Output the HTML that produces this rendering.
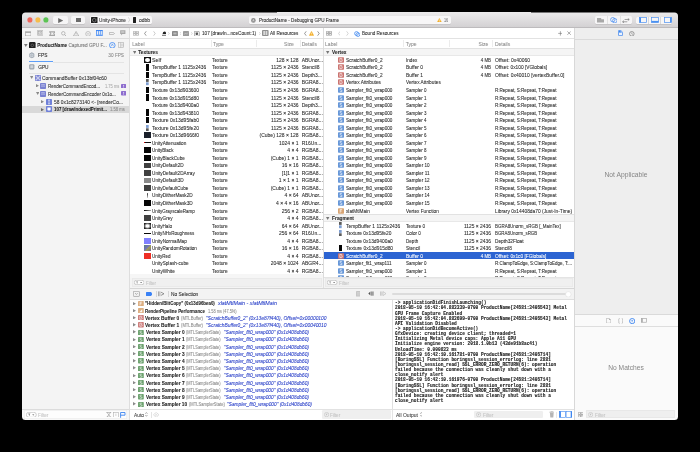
<!DOCTYPE html><html><head><meta charset="utf-8"><style>
html,body{margin:0;padding:0;width:700px;height:452px;overflow:hidden;background:#000;}
body{font-family:"Liberation Sans",sans-serif;position:relative;}
#w{position:absolute;left:0;top:0;width:700px;height:452px;clip-path:inset(12.6px 22px 32px 22px round 3.5px);background:#f4f4f4;will-change:transform;}
#w div,#w span,#w svg{position:absolute;}
#w span{white-space:nowrap;font-size:5px;line-height:6px;color:#222;-webkit-text-stroke-width:0.07px;}
.g{color:#8a8a8a!important}
.b{font-weight:bold}
.m{font-family:"Liberation Mono",monospace;}
</style></head><body><div id="w"><div style="left:22px;top:12px;width:656px;height:15px;background:linear-gradient(#ecebec,#d3d1d3);"></div>
<div style="left:22px;top:27px;width:656px;height:1px;background:#bdbbbd;"></div>
<svg style="left:26.8px;top:17.3px" width="5.8" height="5.8" viewBox="0 0 5.8 5.8"><circle cx="2.9" cy="2.9" r="2.55" fill="#f0665c"/></svg>
<svg style="left:34.800000000000004px;top:17.3px" width="5.8" height="5.8" viewBox="0 0 5.8 5.8"><circle cx="2.9" cy="2.9" r="2.55" fill="#f6bd4c"/></svg>
<svg style="left:42.800000000000004px;top:17.3px" width="5.8" height="5.8" viewBox="0 0 5.8 5.8"><circle cx="2.9" cy="2.9" r="2.55" fill="#5cc454"/></svg>
<div style="left:53px;top:16px;width:15px;height:8px;background:#f6f5f6;border-radius:1.5px;box-shadow:0 0.5px 0.6px rgba(0,0,0,.16);"></div>
<svg style="left:57.6px;top:17.6px" width="5.4" height="5.2" viewBox="0 0 5.4 5.2"><path d="M0.2 0.1L5.2 2.6L0.2 5.1Z" fill="#6a6a6a"/></svg>
<div style="left:71px;top:16px;width:14px;height:8px;background:#f6f5f6;border-radius:1.5px;box-shadow:0 0.5px 0.6px rgba(0,0,0,.16);"></div>
<svg style="left:75.9px;top:17.9px" width="5" height="4.6" viewBox="0 0 5 4.6"><rect x="0" y="0" width="5" height="4.6" fill="#6a6a6a"/></svg>
<div style="left:90px;top:16px;width:62px;height:8px;background:#f8f7f8;border-radius:1.5px;box-shadow:0 0.5px 0.6px rgba(0,0,0,.16);"></div>
<svg style="left:91px;top:17px" width="6.5" height="6" viewBox="0 0 6.5 6"><rect x="0" y="0" width="6.5" height="6" rx="0.6" fill="#1f1f1f"/><path d="M3.25 1.3L4.9 2.25V4.15L3.25 5.1L1.6 4.15V2.25Z" fill="none" stroke="#bbb" stroke-width="0.5"/></svg>
<span style="left:99px;top:18px;font-size:4.8px;color:#2a2a2a;transform:scaleX(0.9829);transform-origin:0 0;">Unity-iPhone</span>
<svg style="left:127.6px;top:17.4px" width="2.2" height="5.6" viewBox="0 0 2.2 5.6"><path d="M0.3 0.3L1.9 2.8L0.3 5.3" fill="none" stroke="#b5b5b5" stroke-width="0.5"/></svg>
<svg style="left:133px;top:17px" width="3.2" height="6" viewBox="0 0 3.2 6"><rect x="0" y="0" width="3.2" height="6" rx="0.6" fill="#1f1f1f"/></svg>
<span style="left:139px;top:18px;font-size:4.8px;color:#2a2a2a;transform:scaleX(1.0307);transform-origin:0 0;">odbb</span>
<div style="left:249px;top:16px;width:202.4px;height:8px;background:#f7f6f7;border-radius:1.5px;box-shadow:0 0.5px 0.6px rgba(0,0,0,.14);"></div>
<svg style="left:251.4px;top:18px" width="4.8" height="4.8" viewBox="0 0 4.8 4.8"><circle cx="2.4" cy="2.4" r="2.3" fill="#8c8c8c"/><path d="M1.6 3.4L2.4 1.3L3.2 3.4M1.9 2.7H2.9" fill="none" stroke="#f2f2f2" stroke-width="0.45"/></svg>
<span style="left:259.4px;top:18px;font-size:4.8px;color:#2a2a2a;transform:scaleX(0.9556);transform-origin:0 0;">ProductName - Debugging GPU Frame</span>
<svg style="left:436.8px;top:17.8px" width="4.8" height="4.6" viewBox="0 0 4.8 4.6"><path d="M2.4 0.2L4.7 4.4H0.1Z" fill="#f4b02a" stroke="#f4b02a" stroke-width="0.3" stroke-linejoin="round"/><path d="M2.4 1.5V3" stroke="#fff" stroke-width="0.5"/><circle cx="2.4" cy="3.65" r="0.28" fill="#fff"/></svg>
<span style="left:444px;top:18px;font-size:4.6px;color:#666;-webkit-text-stroke-width:0;transform:scaleX(0.8195);transform-origin:0 0;">16</span>
<div style="left:595px;top:16px;width:37px;height:8px;background:#f6f5f6;border-radius:1.5px;box-shadow:0 0.5px 0.6px rgba(0,0,0,.16);"></div>
<div style="left:607px;top:16px;width:1px;height:8px;background:#e2e2e2;"></div>
<div style="left:620px;top:16px;width:1px;height:8px;background:#e2e2e2;"></div>
<svg style="left:597.1px;top:18.3px" width="7" height="4.6" viewBox="0 0 7 4.6"><path d="M0 0H4.2V1.3H7V4.6H0Z" fill="#a8a8a8"/></svg>
<svg style="left:609.8px;top:16.9px" width="7.6" height="6.4" viewBox="0 0 7.6 6.4"><circle cx="2.8" cy="2.7" r="2.2" fill="none" stroke="#4a8ef2" stroke-width="0.75"/><circle cx="4.8" cy="3.7" r="2.2" fill="none" stroke="#4a8ef2" stroke-width="0.75"/></svg>
<svg style="left:622.4px;top:17.5px" width="7.8" height="5.2" viewBox="0 0 7.8 5.2"><path d="M2.6 1.5H7.2M5.8 0.3L7.2 1.5L5.8 2.7M5.2 3.8H0.6M2 2.6L0.6 3.8L2 5" fill="none" stroke="#6a6a6a" stroke-width="0.6"/></svg>
<div style="left:636.3px;top:16.8px;width:36px;height:7px;background:#f7f6f7;border-radius:1.5px;box-shadow:0 0.4px 0.6px rgba(0,0,0,.18);"></div>
<div style="left:648px;top:17px;width:1px;height:7px;background:#d8d8d8;"></div>
<div style="left:660px;top:17px;width:1px;height:7px;background:#d8d8d8;"></div>
<svg style="left:639.3px;top:17.1px" width="8" height="6" viewBox="0 0 8 6"><rect x="0.4" y="0.5" width="7.2" height="5" fill="none" stroke="#4a90f0" stroke-width="0.7"/><rect x="0.4" y="0.5" width="1.6" height="5" fill="#4a90f0"/></svg>
<svg style="left:651.3px;top:17.1px" width="8" height="6" viewBox="0 0 8 6"><rect x="0.4" y="0.5" width="7.2" height="5" fill="none" stroke="#4a90f0" stroke-width="0.7"/><rect x="0.4" y="3.9" width="7.2" height="1.6" fill="#4a90f0"/></svg>
<svg style="left:663.5px;top:17.1px" width="8" height="6" viewBox="0 0 8 6"><rect x="0.4" y="0.5" width="7.2" height="5" fill="none" stroke="#4a90f0" stroke-width="0.7"/><rect x="6" y="0.5" width="1.6" height="5" fill="#4a90f0"/></svg>
<div style="left:22px;top:28px;width:107px;height:392px;background:#f4f4f4;"></div>
<div style="left:129px;top:28px;width:1px;height:392px;background:#dedede;"></div>
<div style="left:22px;top:38px;width:107px;height:1px;background:#dcdcdc;"></div>
<svg style="left:25px;top:30.8px" width="6.4" height="5.2" viewBox="0 0 6.4 5.2"><rect x="0.35" y="0.8" width="5.7" height="4.1" fill="none" stroke="#a5a5a5" stroke-width="0.7"/><rect x="0.35" y="0.8" width="5.7" height="1.1" fill="#a5a5a5"/></svg>
<svg style="left:36.8px;top:30.4px" width="6.4" height="5.6" viewBox="0 0 6.4 5.6"><rect x="0.35" y="0.35" width="5.7" height="4.9" rx="0.4" fill="none" stroke="#a5a5a5" stroke-width="0.7"/><rect x="1.6" y="1.5" width="3.2" height="2.6" fill="none" stroke="#a5a5a5" stroke-width="0.6"/><path d="M2.3 2.1L4.1 3.5M4.1 2.1L2.3 3.5" stroke="#a5a5a5" stroke-width="0.5"/></svg>
<svg style="left:48.8px;top:30.8px" width="6.6" height="5.2" viewBox="0 0 6.6 5.2"><path d="M0.2 0.3H6.4V1.3L5.2 2.6L6.4 3.9V4.9H0.2V3.9L1.4 2.6L0.2 1.3Z" fill="#a5a5a5"/><path d="M1.6 1.5H5L4.1 2.6L5 3.7H1.6L2.5 2.6Z" fill="#f4f4f4"/></svg>
<svg style="left:60.8px;top:30.6px" width="5.6" height="5.6" viewBox="0 0 5.6 5.6"><circle cx="2.3" cy="2.3" r="1.75" fill="none" stroke="#a5a5a5" stroke-width="0.7"/><path d="M3.5 3.5L5.2 5.2" stroke="#a5a5a5" stroke-width="0.8"/></svg>
<svg style="left:72.8px;top:30.6px" width="6.2" height="5.4" viewBox="0 0 6.2 5.4"><path d="M3.1 0.5L5.8 5H0.4Z" fill="none" stroke="#a5a5a5" stroke-width="0.7" stroke-linejoin="round"/><path d="M3.1 2V3.5M3.1 4V4.4" stroke="#a5a5a5" stroke-width="0.6"/></svg>
<svg style="left:84.5px;top:30.5px" width="6.2" height="5.8" viewBox="0 0 6.2 5.8"><circle cx="3.1" cy="2.9" r="2.4" fill="none" stroke="#a5a5a5" stroke-width="0.6"/><path d="M1.9 2.9H4.3" stroke="#a5a5a5" stroke-width="0.6"/></svg>
<svg style="left:96.4px;top:30.4px" width="6.8" height="5.8" viewBox="0 0 6.8 5.8"><rect x="0" y="0" width="6.8" height="1.1" fill="#3d86f4"/><rect x="0" y="4.7" width="6.8" height="1.1" fill="#3d86f4"/><path d="M0.5 1V4.8M2.45 1V4.8M4.35 1V4.8M6.3 1V4.8" stroke="#3d86f4" stroke-width="0.75"/></svg>
<svg style="left:108.5px;top:32.2px" width="6" height="3" viewBox="0 0 6 3"><path d="M0.4 0.4H4.2L5.5 1.5L4.2 2.6H0.4Z" fill="none" stroke="#a5a5a5" stroke-width="0.7"/></svg>
<svg style="left:120.4px;top:30.4px" width="5.6" height="5.8" viewBox="0 0 5.6 5.8"><path d="M0.2 0.3H5.4V4H2.4L1.2 5.4V4H0.2Z" fill="#a5a5a5"/><path d="M1.2 1.4H4.4M1.2 2.6H4.4" stroke="#f4f4f4" stroke-width="0.45"/></svg>
<svg style="left:24.4px;top:43.8px" width="3.6" height="3" viewBox="0 0 3.6 3"><path d="M0 0H3.6L1.8 3Z" fill="#777"/></svg>
<svg style="left:29.2px;top:41.6px" width="6.6" height="6.6" viewBox="0 0 6.6 6.6"><rect x="0" y="0" width="6.6" height="6.6" rx="1.3" fill="#1e1e1e"/><circle cx="3.3" cy="3.3" r="1.3" fill="none" stroke="#888" stroke-width="0.5"/></svg>
<span style="left:37.2px;top:43px;font-weight:bold;color:#222;font-size:4.6px;">ProductName</span>
<span style="left:68.4px;top:43px;color:#777;font-size:4.7px;">Captured GPU F...</span>
<svg style="left:109px;top:41.9px" width="6.6" height="6.6" viewBox="0 0 6.6 6.6"><circle cx="3.3" cy="3.3" r="2.8" fill="none" stroke="#3a86f5" stroke-width="0.8"/><path d="M2 4.2L3.4 1.9L4.4 4.2" fill="none" stroke="#3a86f5" stroke-width="0.6"/></svg>
<svg style="left:118.2px;top:42px" width="6" height="6" viewBox="0 0 6 6"><rect x="0.35" y="0.35" width="5.3" height="5.3" fill="none" stroke="#b0b0b0" stroke-width="0.6"/><path d="M2.6 0.4V5.6M2.6 2.2H5.6M2.6 3.8H5.6" stroke="#b0b0b0" stroke-width="0.5"/></svg>
<svg style="left:29px;top:52.1px" width="5.6" height="6.6" viewBox="0 0 5.6 6.6"><path d="M2.8 0.3L5.3 1.7V4.9L2.8 6.3L0.3 4.9V1.7Z" fill="#9aa3ad"/><path d="M2.8 1.2L4.5 2.2V4.4L2.8 5.4L1.1 4.4V2.2Z" fill="#d5dae0"/><path d="M2.8 1.2V5.4M1.1 3.3H4.5" stroke="#9aa3ad" stroke-width="0.4"/></svg>
<span style="left:38px;top:53px;color:#222;font-size:4.8px;">FPS</span>
<span style="left:-76px;width:200px;text-align:right;top:53px;color:#888;font-size:4.7px;">30 FPS</span>
<div style="left:29px;top:61px;width:24px;height:1px;background:#5d9ef8;"></div>
<div style="left:53px;top:62px;width:71px;height:1px;background:#e4e4e4;"></div>
<svg style="left:29px;top:64px" width="5.6" height="5.6" viewBox="0 0 5.6 5.6"><rect x="0.2" y="0.2" width="5.2" height="5.2" rx="1.1" fill="#9aa3ad"/><rect x="1.3" y="1.3" width="3" height="3" rx="0.4" fill="#cfd4da"/></svg>
<span style="left:38.2px;top:65px;color:#222;font-size:4.8px;">GPU</span>
<div style="left:29px;top:73px;width:95px;height:1px;background:#e4e4e4;"></div>
<svg style="left:29.8px;top:76.39999999999999px" width="3.4" height="3" viewBox="0 0 3.4 3"><path d="M0 0H3.4L1.7 3Z" fill="#8a8a8a"/></svg>
<svg style="left:35px;top:75px" width="6" height="6" viewBox="0 0 6 6"><rect x="0" y="0" width="6" height="6" rx="0.8" fill="#7a82d2"/><path d="M1.6 1.6L4.4 4.4M4.4 1.6L1.6 4.4" stroke="#fff" stroke-width="0.6"/><circle cx="1.5" cy="1.5" r="0.6" fill="none" stroke="#fff" stroke-width="0.45"/><circle cx="4.5" cy="1.5" r="0.6" fill="none" stroke="#fff" stroke-width="0.45"/><circle cx="1.5" cy="4.5" r="0.6" fill="none" stroke="#fff" stroke-width="0.45"/><circle cx="4.5" cy="4.5" r="0.6" fill="none" stroke="#fff" stroke-width="0.45"/></svg>
<span style="left:42.2px;top:76px;color:#2e2e2e;font-size:4.8px;transform:scaleX(1.0180);transform-origin:0 0;">CommandBuffer 0x13bf04c60</span>
<svg style="left:35.9px;top:84.1px" width="3" height="3.4" viewBox="0 0 3 3.4"><path d="M0 0L3 1.7L0 3.4Z" fill="#8a8a8a"/></svg>
<svg style="left:40.4px;top:82.9px" width="6" height="6" viewBox="0 0 6 6"><rect x="0" y="0" width="6" height="6" rx="0.8" fill="#7a82d2"/><circle cx="2" cy="3" r="0.6" fill="#fff"/><circle cx="4" cy="3" r="0.6" fill="#fff"/><path d="M1.2 1.6H4.8" stroke="#fff" stroke-width="0.4"/></svg>
<span style="left:48px;top:84px;color:#2e2e2e;font-size:4.7px;transform:scaleX(0.9612);transform-origin:0 0;">RenderCommandEncod...</span>
<span style="left:104.7px;top:84px;font-size:4.6px;color:#aaa;transform:scaleX(0.8750);transform-origin:0 0;">1.75 ms</span>
<svg style="left:120.9px;top:83.6px" width="5.2" height="4.6" viewBox="0 0 5.2 4.6"><rect x="0" y="0" width="5.2" height="4.6" rx="0.8" fill="#8d6dce"/><path d="M2.6 0.9V2.7" stroke="#fff" stroke-width="0.7"/><circle cx="2.6" cy="3.55" r="0.38" fill="#fff"/></svg>
<svg style="left:35.599999999999994px;top:92.0px" width="3.4" height="3" viewBox="0 0 3.4 3"><path d="M0 0H3.4L1.7 3Z" fill="#8a8a8a"/></svg>
<svg style="left:40.4px;top:90.5px" width="6" height="6" viewBox="0 0 6 6"><rect x="0" y="0" width="6" height="6" rx="0.8" fill="#7a82d2"/><circle cx="2" cy="3" r="0.6" fill="#fff"/><circle cx="4" cy="3" r="0.6" fill="#fff"/><path d="M1.2 1.6H4.8" stroke="#fff" stroke-width="0.4"/></svg>
<span style="left:48px;top:92px;color:#2e2e2e;font-size:4.7px;transform:scaleX(0.9722);transform-origin:0 0;">RenderCommandEncoder 0x1o...</span>
<svg style="left:120.9px;top:91.1px" width="5.2" height="4.6" viewBox="0 0 5.2 4.6"><rect x="0" y="0" width="5.2" height="4.6" rx="0.8" fill="#8d6dce"/><path d="M2.6 0.9V2.7" stroke="#fff" stroke-width="0.7"/><circle cx="2.6" cy="3.55" r="0.38" fill="#fff"/></svg>
<svg style="left:41.2px;top:100.0px" width="3" height="3.4" viewBox="0 0 3 3.4"><path d="M0 0L3 1.7L0 3.4Z" fill="#8a8a8a"/></svg>
<svg style="left:46px;top:98.8px" width="6" height="6" viewBox="0 0 6 6"><rect x="0" y="0" width="6" height="6" rx="0.8" fill="#6f80d8"/><path d="M3 1.1V4.9M2.1 1.1H3.9M2.1 4.9H3.9" stroke="#fff" stroke-width="0.6"/></svg>
<span style="left:54.1px;top:100px;color:#2e2e2e;font-size:4.7px;transform:scaleX(1.0388);transform-origin:0 0;">58 0x1c8273140 &lt;- [renderCo...</span>
<div style="left:22px;top:106px;width:107px;height:7px;background:#d9d9d9;"></div>
<svg style="left:41.2px;top:107.7px" width="3" height="3.4" viewBox="0 0 3 3.4"><path d="M0 0L3 1.7L0 3.4Z" fill="#6a6a6a"/></svg>
<svg style="left:46px;top:106.4px" width="6" height="6" viewBox="0 0 6 6"><rect x="0" y="0" width="6" height="6" rx="0.8" fill="#6f80d8"/><path d="M1.4 1.6H4.6V3.4Q4.6 4.6 3 4.6Q1.4 4.6 1.4 3.4Z" fill="#fff"/></svg>
<span style="left:54.1px;top:107px;color:#1e1e1e;font-weight:bold;font-size:4.6px;transform:scaleX(0.9548);transform-origin:0 0;">107 [drawIndexedPrimit...</span>
<span style="left:110.1px;top:107px;font-size:4.6px;color:#8a8a8a;transform:scaleX(0.8994);transform-origin:0 0;">1.58 ms</span>
<div style="left:22px;top:409px;width:107px;height:1px;background:#dcdcdc;"></div>
<div style="left:22px;top:410px;width:107px;height:10px;background:#f7f7f7;"></div>
<div style="left:24.4px;top:410.4px;width:103px;height:8.8px;background:#fdfdfd;border-radius:1px;box-shadow:inset 0 0 0 0.5px #e6e6e6;"></div>
<svg style="left:26px;top:411.9px" width="10.6" height="5.6" viewBox="0 0 10.6 5.6"><rect x="0.3" y="0.3" width="10" height="5" rx="2.5" fill="#fff" stroke="#a8a8a8" stroke-width="0.55"/><path d="M2.1 1.6H4.4L3.6 2.9V4L3 3.7V2.9Z" fill="#8a8a8a"/><path d="M6.2 2.4H8.3L7.25 3.5Z" fill="#444"/></svg>
<span style="left:37.7px;top:413px;color:#c4c4c4;font-size:4.8px;transform:scaleX(0.9652);transform-origin:0 0;">Filter</span>
<svg style="left:106px;top:411.8px" width="5.6" height="5.6" viewBox="0 0 5.6 5.6"><path d="M0.4 0.4H5.2M0.4 5.2H5.2M1 0.4L2.8 2.8L1 5.2M4.6 0.4L2.8 2.8L4.6 5.2" fill="none" stroke="#888" stroke-width="0.55"/></svg>
<svg style="left:112.9px;top:411.8px" width="5.8" height="5.6" viewBox="0 0 5.8 5.6"><rect x="0.3" y="0.3" width="5.2" height="5" fill="none" stroke="#aaa" stroke-width="0.55"/><path d="M2.9 1.6V4" stroke="#aaa" stroke-width="0.5"/></svg>
<svg style="left:120.3px;top:411.6px" width="5.6" height="6" viewBox="0 0 5.6 6"><path d="M0.6 5.8V0.5H5V3.2H0.6" fill="none" stroke="#3d86f0" stroke-width="0.9"/></svg>
<div style="left:130px;top:28px;width:444px;height:260px;background:#fff;"></div>
<div style="left:130px;top:38px;width:444px;height:1px;background:#e2e2e2;"></div>
<div style="left:323px;top:28px;width:1px;height:250px;background:#dcdcdc;"></div>
<svg style="left:133px;top:31.1px" width="5.8" height="4.6" viewBox="0 0 5.8 4.6"><path d="M0.3 0.3H2.6V2.05H0.3Z M3.2 0.3H5.5V2.05H3.2Z M0.3 2.55H2.6V4.3H0.3Z M3.2 2.55H5.5V4.3H3.2Z" fill="none" stroke="#9a9a9a" stroke-width="0.6"/></svg>
<svg style="left:144.1px;top:30.9px" width="2.8" height="5" viewBox="0 0 2.8 5"><path d="M2.2 0.3L0.6 2.5L2.2 4.7" fill="none" stroke="#555" stroke-width="0.6"/></svg>
<svg style="left:153.4px;top:30.9px" width="2.8" height="5" viewBox="0 0 2.8 5"><path d="M0.6 0.3L2.2 2.5L0.6 4.7" fill="none" stroke="#aaa" stroke-width="0.6"/></svg>
<svg style="left:161.6px;top:30.9px" width="4.8" height="4.8" viewBox="0 0 4.8 4.8"><path d="M0.6 3Q0.6 0.4 2.4 0.4Q4.2 0.4 4.2 3Z" fill="#222"/><rect x="0" y="3.8" width="4.8" height="0.9" fill="#555"/></svg>
<svg style="left:168.29999999999998px;top:31.9px" width="1.6" height="3" viewBox="0 0 1.6 3"><path d="M0.3 0.2L1.3 1.5L0.3 2.8" fill="none" stroke="#aaa" stroke-width="0.45"/></svg>
<svg style="left:171.8px;top:30.8px" width="5.9" height="5.3" viewBox="0 0 5.9 5.3"><rect x="0" y="0" width="5.9" height="5.3" rx="0.7" fill="#8a8a8a"/><path d="M1.3 2.65H4.6" stroke="#fff" stroke-width="0.5"/><path d="M1.3 1.5H4.6M1.3 3.8H4.6" stroke="#c8c8c8" stroke-width="0.4"/></svg>
<svg style="left:179.7px;top:31.9px" width="1.6" height="3" viewBox="0 0 1.6 3"><path d="M0.3 0.2L1.3 1.5L0.3 2.8" fill="none" stroke="#aaa" stroke-width="0.45"/></svg>
<svg style="left:183px;top:30.8px" width="6" height="5.3" viewBox="0 0 6 5.3"><rect x="0" y="0" width="6" height="5.3" rx="0.7" fill="#9c9c9c"/><path d="M1.2 3.6L2.4 2L3.6 3.2L4.8 1.6" fill="none" stroke="#dedede" stroke-width="0.5"/></svg>
<svg style="left:191.2px;top:31.9px" width="1.6" height="3" viewBox="0 0 1.6 3"><path d="M0.3 0.2L1.3 1.5L0.3 2.8" fill="none" stroke="#aaa" stroke-width="0.45"/></svg>
<svg style="left:194.3px;top:30.7px" width="5.6" height="5.5" viewBox="0 0 5.6 5.5"><rect x="0.3" y="0.3" width="5" height="4.9" rx="0.9" fill="#fff" stroke="#6a6a6a" stroke-width="0.6"/><path d="M1.6 1.6H4V2.9Q4 4.1 2.8 4.1Q1.6 4.1 1.6 2.9Z" fill="#555"/></svg>
<span style="left:201.6px;top:31px;color:#2a2a2a;font-size:4.8px;transform:scaleX(0.9800);transform-origin:0 0;">107 [drawIn...nceCount:1)</span>
<svg style="left:259.0px;top:31.9px" width="1.6" height="3" viewBox="0 0 1.6 3"><path d="M0.3 0.2L1.3 1.5L0.3 2.8" fill="none" stroke="#aaa" stroke-width="0.45"/></svg>
<svg style="left:262.3px;top:30.4px" width="6.6" height="6" viewBox="0 0 6.6 6"><rect x="0" y="0" width="6.6" height="6" rx="0.9" fill="#8f8f8f"/><path d="M1.3 1.2H3V2.7H1.3Z M3.6 1.2H5.3V2.7H3.6Z M1.3 3.3H3V4.8H1.3Z M3.6 3.3H5.3V4.8H3.6Z" fill="#f2f2f2"/></svg>
<span style="left:270px;top:31px;color:#2a2a2a;font-size:4.8px;transform:scaleX(0.9597);transform-origin:0 0;">All Resources</span>
<svg style="left:304.0px;top:30.9px" width="2.8" height="5" viewBox="0 0 2.8 5"><path d="M2.2 0.3L0.6 2.5L2.2 4.7" fill="none" stroke="#555" stroke-width="0.6"/></svg>
<svg style="left:309.1px;top:30.9px" width="5" height="4.9" viewBox="0 0 5 4.9"><path d="M2.5 0.3L4.8 4.6H0.2Z" fill="#f4b02a" stroke="#f4b02a" stroke-width="0.4" stroke-linejoin="round"/><path d="M2.5 1.7V3.2" stroke="#fff" stroke-width="0.5"/><circle cx="2.5" cy="3.85" r="0.28" fill="#fff"/></svg>
<svg style="left:317.0px;top:30.9px" width="2.8" height="5" viewBox="0 0 2.8 5"><path d="M0.6 0.3L2.2 2.5L0.6 4.7" fill="none" stroke="#555" stroke-width="0.6"/></svg>
<svg style="left:326.4px;top:31.1px" width="5.8" height="4.6" viewBox="0 0 5.8 4.6"><path d="M0.3 0.3H2.6V2.05H0.3Z M3.2 0.3H5.5V2.05H3.2Z M0.3 2.55H2.6V4.3H0.3Z M3.2 2.55H5.5V4.3H3.2Z" fill="none" stroke="#8a8a8a" stroke-width="0.6"/></svg>
<svg style="left:337.6px;top:30.9px" width="2.8" height="5" viewBox="0 0 2.8 5"><path d="M2.2 0.3L0.6 2.5L2.2 4.7" fill="none" stroke="#bbb" stroke-width="0.6"/></svg>
<svg style="left:346.20000000000005px;top:30.9px" width="2.8" height="5" viewBox="0 0 2.8 5"><path d="M0.6 0.3L2.2 2.5L0.6 4.7" fill="none" stroke="#bbb" stroke-width="0.6"/></svg>
<svg style="left:353.9px;top:30.5px" width="6.4" height="6" viewBox="0 0 6.4 6"><circle cx="2.5" cy="2.5" r="1.9" fill="none" stroke="#3d86f0" stroke-width="0.75"/><circle cx="3.9" cy="3.6" r="1.9" fill="none" stroke="#3d86f0" stroke-width="0.75"/></svg>
<span style="left:361.9px;top:31px;color:#2a2a2a;font-size:4.8px;transform:scaleX(0.9570);transform-origin:0 0;">Bound Resources</span>
<svg style="left:557.6px;top:30.9px" width="4.8" height="4.8" viewBox="0 0 4.8 4.8"><path d="M2.4 0.2V4.6M0.2 2.4H4.6" stroke="#666" stroke-width="0.55"/></svg>
<svg style="left:567.2px;top:31.2px" width="4.2" height="4.2" viewBox="0 0 4.2 4.2"><path d="M0.4 0.4L3.8 3.8M3.8 0.4L0.4 3.8" stroke="#666" stroke-width="0.55"/></svg>
<div style="left:130px;top:39px;width:193px;height:9px;background:#fff;"></div>
<div style="left:130px;top:48px;width:193px;height:1px;background:#e2e2e2;"></div>
<span style="left:132.3px;top:41px;color:#8e8e8e;">Label</span>
<div style="left:211px;top:40px;width:1px;height:7px;background:#ececec;"></div>
<span style="left:212.9px;top:41px;color:#8e8e8e;">Type</span>
<div style="left:256px;top:40px;width:1px;height:7px;background:#ececec;"></div>
<span style="left:93.80000000000001px;width:200px;text-align:right;top:41px;color:#8e8e8e;">Size</span>
<div style="left:300px;top:40px;width:1px;height:7px;background:#ececec;"></div>
<span style="left:301.7px;top:41px;color:#8e8e8e;">Details</span>
<div style="left:324px;top:39px;width:250px;height:9px;background:#fff;"></div>
<div style="left:324px;top:48px;width:250px;height:1px;background:#e2e2e2;"></div>
<span style="left:325.1px;top:41px;color:#8e8e8e;">Label</span>
<div style="left:403px;top:40px;width:1px;height:7px;background:#ececec;"></div>
<span style="left:405.8px;top:41px;color:#8e8e8e;">Type</span>
<div style="left:449px;top:40px;width:1px;height:7px;background:#ececec;"></div>
<span style="left:288.2px;width:200px;text-align:right;top:41px;color:#8e8e8e;">Size</span>
<div style="left:492px;top:40px;width:1px;height:7px;background:#ececec;"></div>
<span style="left:494.9px;top:41px;color:#8e8e8e;">Details</span>
<div style="left:130px;top:48px;width:193px;height:1px;background:#e2e2e2;"></div>
<div style="left:130px;top:49px;width:193px;height:6px;background:#f5f5f5;"></div>
<div style="left:130px;top:55px;width:193px;height:1px;background:#e8e8e8;"></div>
<svg style="left:132.60000000000002px;top:50.800000000000004px" width="3.4" height="3" viewBox="0 0 3.4 3"><path d="M0 0H3.4L1.7 3Z" fill="#777"/></svg>
<span style="left:138.3px;top:50px;font-weight:bold;color:#2a2a2a;font-size:4.8px;">Textures</span>
<div style="left:324px;top:48px;width:250px;height:1px;background:#e2e2e2;"></div>
<div style="left:324px;top:49px;width:250px;height:6px;background:#f5f5f5;"></div>
<div style="left:324px;top:55px;width:250px;height:1px;background:#e8e8e8;"></div>
<svg style="left:326.40000000000003px;top:50.800000000000004px" width="3.4" height="3" viewBox="0 0 3.4 3"><path d="M0 0H3.4L1.7 3Z" fill="#777"/></svg>
<span style="left:332.1px;top:50px;font-weight:bold;color:#2a2a2a;font-size:4.8px;">Vertex</span>
<div style="left:144px;top:57px;width:7px;height:6px;background:#111;"></div>
<div style="left:145.3px;top:57.8px;width:4.6px;height:4.3px;background:#fff;border-radius:50%;"></div>
<span style="left:152.3px;top:57px;color:#2a2a2a;transform:scaleX(1.0667);transform-origin:0 0;">Self</span>
<span style="left:212.2px;top:57px;color:#2a2a2a;transform:scaleX(0.9509);transform-origin:0 0;">Texture</span>
<span style="left:98.60000000000002px;width:200px;text-align:right;top:57px;color:#2a2a2a;">128 × 128</span>
<span style="left:301.7px;top:57px;color:#2a2a2a;">ABUnor...</span>
<div style="left:146px;top:64px;width:3px;height:7px;background:#050505;"></div>
<span style="left:152.3px;top:64px;color:#2a2a2a;transform:scaleX(0.9798);transform-origin:0 0;">TempBuffer 1 1125x2436</span>
<span style="left:212.2px;top:64px;color:#2a2a2a;transform:scaleX(0.9509);transform-origin:0 0;">Texture</span>
<span style="left:98.60000000000002px;width:200px;text-align:right;top:64px;color:#2a2a2a;">1125 × 2436</span>
<span style="left:301.7px;top:64px;color:#2a2a2a;">Stencil8</span>
<div style="left:146px;top:72px;width:3px;height:6px;background:#050505;"></div>
<span style="left:152.3px;top:72px;color:#2a2a2a;transform:scaleX(0.9798);transform-origin:0 0;">TempBuffer 1 1125x2436</span>
<span style="left:212.2px;top:72px;color:#2a2a2a;transform:scaleX(0.9509);transform-origin:0 0;">Texture</span>
<span style="left:98.60000000000002px;width:200px;text-align:right;top:72px;color:#2a2a2a;">1125 × 2436</span>
<span style="left:301.7px;top:72px;color:#2a2a2a;">Depth3...</span>
<svg style="left:146.3px;top:79.39px" width="2.7" height="6.2" viewBox="0 0 2.7 6.2"><rect x="0" y="0" width="2.7" height="2.9" fill="#5a5a5a"/><rect x="0" y="3.3" width="2.7" height="2.9" fill="#7f9fd2"/></svg>
<span style="left:152.3px;top:79px;color:#2a2a2a;transform:scaleX(0.9798);transform-origin:0 0;">TempBuffer 1 1125x2436</span>
<span style="left:212.2px;top:79px;color:#2a2a2a;transform:scaleX(0.9509);transform-origin:0 0;">Texture</span>
<span style="left:98.60000000000002px;width:200px;text-align:right;top:79px;color:#2a2a2a;">1125 × 2436</span>
<span style="left:301.7px;top:79px;color:#2a2a2a;">BGRA8...</span>
<div style="left:146px;top:87px;width:3px;height:6px;background:#050505;"></div>
<span style="left:152.3px;top:87px;color:#2a2a2a;transform:scaleX(0.9773);transform-origin:0 0;">Texture 0x13d903600</span>
<span style="left:212.2px;top:87px;color:#2a2a2a;transform:scaleX(0.9509);transform-origin:0 0;">Texture</span>
<span style="left:98.60000000000002px;width:200px;text-align:right;top:87px;color:#2a2a2a;">1125 × 2436</span>
<span style="left:301.7px;top:87px;color:#2a2a2a;">BGRA8...</span>
<div style="left:146px;top:94px;width:3px;height:7px;background:#050505;"></div>
<span style="left:152.3px;top:95px;color:#2a2a2a;transform:scaleX(0.9773);transform-origin:0 0;">Texture 0x13d915d80</span>
<span style="left:212.2px;top:95px;color:#2a2a2a;transform:scaleX(0.9509);transform-origin:0 0;">Texture</span>
<span style="left:98.60000000000002px;width:200px;text-align:right;top:95px;color:#2a2a2a;">1125 × 2436</span>
<span style="left:301.7px;top:95px;color:#2a2a2a;">Stencil8</span>
<span style="left:152.3px;top:102px;color:#2a2a2a;transform:scaleX(0.9773);transform-origin:0 0;">Texture 0x13d9400a0</span>
<span style="left:212.2px;top:102px;color:#2a2a2a;transform:scaleX(0.9509);transform-origin:0 0;">Texture</span>
<span style="left:98.60000000000002px;width:200px;text-align:right;top:102px;color:#2a2a2a;">1125 × 2436</span>
<span style="left:301.7px;top:102px;color:#2a2a2a;">Depth3...</span>
<div style="left:146px;top:109px;width:3px;height:7px;background:#050505;"></div>
<span style="left:152.3px;top:110px;color:#2a2a2a;transform:scaleX(0.9773);transform-origin:0 0;">Texture 0x13d943810</span>
<span style="left:212.2px;top:110px;color:#2a2a2a;transform:scaleX(0.9509);transform-origin:0 0;">Texture</span>
<span style="left:98.60000000000002px;width:200px;text-align:right;top:110px;color:#2a2a2a;">1125 × 2436</span>
<span style="left:301.7px;top:110px;color:#2a2a2a;">BGRA8...</span>
<div style="left:146px;top:117px;width:3px;height:6px;background:#050505;"></div>
<span style="left:152.3px;top:117px;color:#2a2a2a;transform:scaleX(1.0064);transform-origin:0 0;">Texture 0x13d95fab0</span>
<span style="left:212.2px;top:117px;color:#2a2a2a;transform:scaleX(0.9509);transform-origin:0 0;">Texture</span>
<span style="left:98.60000000000002px;width:200px;text-align:right;top:117px;color:#2a2a2a;">1125 × 2436</span>
<span style="left:301.7px;top:117px;color:#2a2a2a;">BGRA8...</span>
<svg style="left:146.3px;top:124.57px" width="2.7" height="6.2" viewBox="0 0 2.7 6.2"><rect x="0" y="0" width="2.7" height="2.9" fill="#7f9fd2"/><rect x="0" y="3.3" width="2.7" height="2.9" fill="#5a5a5a"/></svg>
<span style="left:152.3px;top:125px;color:#2a2a2a;transform:scaleX(1.0064);transform-origin:0 0;">Texture 0x13d95fe20</span>
<span style="left:212.2px;top:125px;color:#2a2a2a;transform:scaleX(0.9509);transform-origin:0 0;">Texture</span>
<span style="left:98.60000000000002px;width:200px;text-align:right;top:125px;color:#2a2a2a;">1125 × 2436</span>
<span style="left:301.7px;top:125px;color:#2a2a2a;">BGRA8...</span>
<div style="left:144px;top:132px;width:7px;height:6px;background:#1a1f2a;"></div>
<span style="left:152.3px;top:132px;color:#2a2a2a;transform:scaleX(1.0064);transform-origin:0 0;">Texture 0x13d9666f0</span>
<span style="left:212.2px;top:132px;color:#2a2a2a;transform:scaleX(0.9509);transform-origin:0 0;">Texture</span>
<span style="left:98.60000000000002px;width:200px;text-align:right;top:132px;color:#2a2a2a;">(Cube) 128 × 128</span>
<span style="left:301.7px;top:132px;color:#2a2a2a;">RGBA8...</span>
<div style="left:144px;top:142px;width:7px;height:1px;background:linear-gradient(90deg,#c00 0 15%,#111 15%);"></div>
<span style="left:152.3px;top:140px;color:#2a2a2a;transform:scaleX(0.9345);transform-origin:0 0;">UnityAttenuation</span>
<span style="left:212.2px;top:140px;color:#2a2a2a;transform:scaleX(0.9509);transform-origin:0 0;">Texture</span>
<span style="left:98.60000000000002px;width:200px;text-align:right;top:140px;color:#2a2a2a;">1024 × 1</span>
<span style="left:301.7px;top:140px;color:#2a2a2a;">R16Un...</span>
<div style="left:144px;top:147px;width:7px;height:6px;background:#050505;"></div>
<span style="left:152.3px;top:147px;color:#2a2a2a;transform:scaleX(0.9058);transform-origin:0 0;">UnityBlack</span>
<span style="left:212.2px;top:147px;color:#2a2a2a;transform:scaleX(0.9509);transform-origin:0 0;">Texture</span>
<span style="left:98.60000000000002px;width:200px;text-align:right;top:147px;color:#2a2a2a;">4 × 4</span>
<span style="left:301.7px;top:147px;color:#2a2a2a;">RGBA8...</span>
<div style="left:144px;top:155px;width:7px;height:6px;background:#050505;"></div>
<span style="left:152.3px;top:155px;color:#2a2a2a;transform:scaleX(0.9219);transform-origin:0 0;">UnityBlackCube</span>
<span style="left:212.2px;top:155px;color:#2a2a2a;transform:scaleX(0.9509);transform-origin:0 0;">Texture</span>
<span style="left:98.60000000000002px;width:200px;text-align:right;top:155px;color:#2a2a2a;">(Cube) 1 × 1</span>
<span style="left:301.7px;top:155px;color:#2a2a2a;">RGBA8...</span>
<div style="left:144px;top:163px;width:7px;height:5px;background:#404040;"></div>
<span style="left:152.3px;top:162px;color:#2a2a2a;transform:scaleX(0.9423);transform-origin:0 0;">UnityDefault2D</span>
<span style="left:212.2px;top:162px;color:#2a2a2a;transform:scaleX(0.9509);transform-origin:0 0;">Texture</span>
<span style="left:98.60000000000002px;width:200px;text-align:right;top:162px;color:#2a2a2a;">16 × 16</span>
<span style="left:301.7px;top:162px;color:#2a2a2a;">RGBA8...</span>
<div style="left:144px;top:170px;width:7px;height:6px;background:#404040;"></div>
<span style="left:152.3px;top:170px;color:#2a2a2a;transform:scaleX(0.9390);transform-origin:0 0;">UnityDefault2DArray</span>
<span style="left:212.2px;top:170px;color:#2a2a2a;transform:scaleX(0.9509);transform-origin:0 0;">Texture</span>
<span style="left:98.60000000000002px;width:200px;text-align:right;top:170px;color:#2a2a2a;">[1]1 × 1</span>
<span style="left:301.7px;top:170px;color:#2a2a2a;">RGBA8...</span>
<div style="left:144px;top:178px;width:7px;height:5px;background:#8a8a8a;"></div>
<span style="left:152.3px;top:177px;color:#2a2a2a;transform:scaleX(0.9423);transform-origin:0 0;">UnityDefault3D</span>
<span style="left:212.2px;top:177px;color:#2a2a2a;transform:scaleX(0.9509);transform-origin:0 0;">Texture</span>
<span style="left:98.60000000000002px;width:200px;text-align:right;top:177px;color:#2a2a2a;">1 × 1 × 1</span>
<span style="left:301.7px;top:177px;color:#2a2a2a;">RGBA8...</span>
<div style="left:144px;top:185px;width:7px;height:6px;background:#404040;"></div>
<span style="left:152.3px;top:185px;color:#2a2a2a;transform:scaleX(0.9263);transform-origin:0 0;">UnityDefaultCube</span>
<span style="left:212.2px;top:185px;color:#2a2a2a;transform:scaleX(0.9509);transform-origin:0 0;">Texture</span>
<span style="left:98.60000000000002px;width:200px;text-align:right;top:185px;color:#2a2a2a;">(Cube) 1 × 1</span>
<span style="left:301.7px;top:185px;color:#2a2a2a;">RGBA8...</span>
<div style="left:146.9px;top:192.64px;width:1.2px;height:5.8px;background:linear-gradient(#222,#ccc);border-radius:0.6px;"></div>
<span style="left:152.3px;top:192px;color:#2a2a2a;transform:scaleX(0.9471);transform-origin:0 0;">UnityDitherMask2D</span>
<span style="left:212.2px;top:192px;color:#2a2a2a;transform:scaleX(0.9509);transform-origin:0 0;">Texture</span>
<span style="left:98.60000000000002px;width:200px;text-align:right;top:192px;color:#2a2a2a;">4 × 64</span>
<span style="left:301.7px;top:192px;color:#2a2a2a;">ABUnor...</span>
<div style="left:144px;top:200px;width:7px;height:6px;background:#050505;"></div>
<span style="left:152.3px;top:200px;color:#2a2a2a;transform:scaleX(0.9471);transform-origin:0 0;">UnityDitherMask3D</span>
<span style="left:212.2px;top:200px;color:#2a2a2a;transform:scaleX(0.9509);transform-origin:0 0;">Texture</span>
<span style="left:98.60000000000002px;width:200px;text-align:right;top:200px;color:#2a2a2a;">4 × 4 × 16</span>
<span style="left:301.7px;top:200px;color:#2a2a2a;">ABUnor...</span>
<div style="left:144px;top:210px;width:7px;height:1px;background:linear-gradient(90deg,#000,#aaa);"></div>
<span style="left:152.3px;top:208px;color:#2a2a2a;transform:scaleX(0.9058);transform-origin:0 0;">UnityGrayscaleRamp</span>
<span style="left:212.2px;top:208px;color:#2a2a2a;transform:scaleX(0.9509);transform-origin:0 0;">Texture</span>
<span style="left:98.60000000000002px;width:200px;text-align:right;top:208px;color:#2a2a2a;">256 × 2</span>
<span style="left:301.7px;top:208px;color:#2a2a2a;">RGBA8...</span>
<div style="left:144px;top:215px;width:7px;height:6px;background:#404040;"></div>
<span style="left:152.3px;top:215px;color:#2a2a2a;transform:scaleX(0.9265);transform-origin:0 0;">UnityGrey</span>
<span style="left:212.2px;top:215px;color:#2a2a2a;transform:scaleX(0.9509);transform-origin:0 0;">Texture</span>
<span style="left:98.60000000000002px;width:200px;text-align:right;top:215px;color:#2a2a2a;">4 × 4</span>
<span style="left:301.7px;top:215px;color:#2a2a2a;">RGBA8...</span>
<div style="left:144px;top:223px;width:7px;height:6px;background:radial-gradient(#fff 0 25%,#aaa 45%,#222 75%);"></div>
<span style="left:152.3px;top:223px;color:#2a2a2a;transform:scaleX(0.9222);transform-origin:0 0;">UnityHalo</span>
<span style="left:212.2px;top:223px;color:#2a2a2a;transform:scaleX(0.9509);transform-origin:0 0;">Texture</span>
<span style="left:98.60000000000002px;width:200px;text-align:right;top:223px;color:#2a2a2a;">64 × 64</span>
<span style="left:301.7px;top:223px;color:#2a2a2a;">ABUnor...</span>
<div style="left:144px;top:233px;width:7px;height:1px;background:#080808;"></div>
<span style="left:152.3px;top:230px;color:#2a2a2a;transform:scaleX(0.9112);transform-origin:0 0;">UnityNHxRoughness</span>
<span style="left:212.2px;top:230px;color:#2a2a2a;transform:scaleX(0.9509);transform-origin:0 0;">Texture</span>
<span style="left:98.60000000000002px;width:200px;text-align:right;top:230px;color:#2a2a2a;">256 × 64</span>
<span style="left:301.7px;top:230px;color:#2a2a2a;">R16Un...</span>
<div style="left:144px;top:238px;width:7px;height:6px;background:#8080ff;"></div>
<span style="left:152.3px;top:238px;color:#2a2a2a;transform:scaleX(0.9346);transform-origin:0 0;">UnityNormalMap</span>
<span style="left:212.2px;top:238px;color:#2a2a2a;transform:scaleX(0.9509);transform-origin:0 0;">Texture</span>
<span style="left:98.60000000000002px;width:200px;text-align:right;top:238px;color:#2a2a2a;">4 × 4</span>
<span style="left:301.7px;top:238px;color:#2a2a2a;">RGBA8...</span>
<div style="left:144px;top:245px;width:7px;height:6px;background:linear-gradient(135deg,#5a8a6a,#7070c0 40%,#a0a050 60%,#6a60a0);"></div>
<span style="left:152.3px;top:245px;color:#2a2a2a;transform:scaleX(0.9157);transform-origin:0 0;">UnityRandomRotation</span>
<span style="left:212.2px;top:245px;color:#2a2a2a;transform:scaleX(0.9509);transform-origin:0 0;">Texture</span>
<span style="left:98.60000000000002px;width:200px;text-align:right;top:245px;color:#2a2a2a;">16 × 16</span>
<span style="left:301.7px;top:245px;color:#2a2a2a;">RGBA8...</span>
<div style="left:144px;top:253px;width:7px;height:6px;background:#ee2f24;"></div>
<span style="left:152.3px;top:253px;color:#2a2a2a;transform:scaleX(0.9039);transform-origin:0 0;">UnityRed</span>
<span style="left:212.2px;top:253px;color:#2a2a2a;transform:scaleX(0.9509);transform-origin:0 0;">Texture</span>
<span style="left:98.60000000000002px;width:200px;text-align:right;top:253px;color:#2a2a2a;">4 × 4</span>
<span style="left:301.7px;top:253px;color:#2a2a2a;">RGBA8...</span>
<span style="left:152.3px;top:260px;color:#2a2a2a;transform:scaleX(0.9340);transform-origin:0 0;">UnitySplash-cube</span>
<span style="left:212.2px;top:260px;color:#2a2a2a;transform:scaleX(0.9509);transform-origin:0 0;">Texture</span>
<span style="left:98.60000000000002px;width:200px;text-align:right;top:260px;color:#2a2a2a;">2048 × 1024</span>
<span style="left:301.7px;top:260px;color:#2a2a2a;">ABGR4...</span>
<span style="left:152.3px;top:268px;color:#2a2a2a;transform:scaleX(0.9426);transform-origin:0 0;">UnityWhite</span>
<span style="left:212.2px;top:268px;color:#2a2a2a;transform:scaleX(0.9509);transform-origin:0 0;">Texture</span>
<span style="left:98.60000000000002px;width:200px;text-align:right;top:268px;color:#2a2a2a;">4 × 4</span>
<span style="left:301.7px;top:268px;color:#2a2a2a;">RGBA8...</span>
<div style="left:130px;top:274px;width:193px;height:4px;background:#f6f6f6;"></div>
<svg style="left:337.9px;top:56.9px" width="6" height="6" viewBox="0 0 6.4 6"><rect x="0" y="0" width="6.4" height="6" rx="0.8" fill="#cb7470"/><path d="M2 1.3H3.6Q4.4 1.3 4.4 2.1Q4.4 2.7 3.8 2.85Q4.6 3 4.6 3.8Q4.6 4.7 3.7 4.7H2Z" fill="none" stroke="#fff" stroke-width="0.65"/></svg>
<span style="left:345.6px;top:57px;color:#2a2a2a;transform:scaleX(0.9521);transform-origin:0 0;">ScratchBuffer0_2</span>
<span style="left:405.8px;top:57px;color:#2a2a2a;transform:scaleX(0.9236);transform-origin:0 0;">Index</span>
<span style="left:291.3px;width:200px;text-align:right;top:57px;color:#2a2a2a;transform:scaleX(0.8825);transform-origin:100% 0;">4 MB</span>
<span style="left:494.9px;top:57px;color:#2a2a2a;transform:scaleX(0.9966);transform-origin:0 0;">Offset: 0x40060</span>
<svg style="left:337.9px;top:64.42999999999999px" width="6" height="6" viewBox="0 0 6.4 6"><rect x="0" y="0" width="6.4" height="6" rx="0.8" fill="#cb7470"/><path d="M2 1.3H3.6Q4.4 1.3 4.4 2.1Q4.4 2.7 3.8 2.85Q4.6 3 4.6 3.8Q4.6 4.7 3.7 4.7H2Z" fill="none" stroke="#fff" stroke-width="0.65"/></svg>
<span style="left:345.6px;top:64px;color:#2a2a2a;transform:scaleX(0.9521);transform-origin:0 0;">ScratchBuffer0_2</span>
<span style="left:405.8px;top:64px;color:#2a2a2a;transform:scaleX(0.9815);transform-origin:0 0;">Buffer 0</span>
<span style="left:291.3px;width:200px;text-align:right;top:64px;color:#2a2a2a;transform:scaleX(0.8825);transform-origin:100% 0;">4 MB</span>
<span style="left:494.9px;top:64px;color:#2a2a2a;transform:scaleX(0.9647);transform-origin:0 0;">Offset: 0x100 [VGlobals]</span>
<svg style="left:337.9px;top:71.96px" width="6" height="6" viewBox="0 0 6.4 6"><rect x="0" y="0" width="6.4" height="6" rx="0.8" fill="#cb7470"/><path d="M2 1.3H3.6Q4.4 1.3 4.4 2.1Q4.4 2.7 3.8 2.85Q4.6 3 4.6 3.8Q4.6 4.7 3.7 4.7H2Z" fill="none" stroke="#fff" stroke-width="0.65"/></svg>
<span style="left:345.6px;top:72px;color:#2a2a2a;transform:scaleX(0.9521);transform-origin:0 0;">ScratchBuffer0_2</span>
<span style="left:405.8px;top:72px;color:#2a2a2a;transform:scaleX(0.9815);transform-origin:0 0;">Buffer 1</span>
<span style="left:291.3px;width:200px;text-align:right;top:72px;color:#2a2a2a;transform:scaleX(0.8825);transform-origin:100% 0;">4 MB</span>
<span style="left:494.9px;top:72px;color:#2a2a2a;transform:scaleX(0.9894);transform-origin:0 0;">Offset: 0x40010 [vertexBuffer.0]</span>
<svg style="left:337.9px;top:79.49px" width="6" height="6" viewBox="0 0 6.4 6"><rect x="0" y="0" width="6.4" height="6" rx="0.8" fill="#cb7470"/><path d="M2 1.3H3.6Q4.4 1.3 4.4 2.1Q4.4 2.7 3.8 2.85Q4.6 3 4.6 3.8Q4.6 4.7 3.7 4.7H2Z" fill="none" stroke="#fff" stroke-width="0.65"/></svg>
<span style="left:345.6px;top:79px;color:#2a2a2a;transform:scaleX(0.9610);transform-origin:0 0;">Vertex Attributes</span>
<span style="left:405.8px;top:79px;color:#2a2a2a;transform:scaleX(0.9555);transform-origin:0 0;">Vertex Attributes</span>
<svg style="left:337.9px;top:87.02px" width="6" height="6" viewBox="0 0 6.4 6"><rect x="0" y="0" width="6.4" height="6" rx="0.8" fill="#6797d8"/><path d="M4.3 1.7Q3.9 1.2 3.2 1.2Q2.1 1.2 2.1 2.1Q2.1 2.8 3.2 3Q4.4 3.2 4.4 4Q4.4 4.8 3.2 4.8Q2.4 4.8 2 4.2" fill="none" stroke="#fff" stroke-width="0.65"/></svg>
<span style="left:345.6px;top:87px;color:#2a2a2a;transform:scaleX(0.9274);transform-origin:0 0;">Sampler_flt0_wrap000</span>
<span style="left:405.8px;top:87px;color:#2a2a2a;transform:scaleX(0.8992);transform-origin:0 0;">Sampler 0</span>
<span style="left:494.9px;top:87px;color:#2a2a2a;transform:scaleX(0.9103);transform-origin:0 0;">R:Repeat, S:Repeat, T:Repeat</span>
<svg style="left:337.9px;top:94.55px" width="6" height="6" viewBox="0 0 6.4 6"><rect x="0" y="0" width="6.4" height="6" rx="0.8" fill="#6797d8"/><path d="M4.3 1.7Q3.9 1.2 3.2 1.2Q2.1 1.2 2.1 2.1Q2.1 2.8 3.2 3Q4.4 3.2 4.4 4Q4.4 4.8 3.2 4.8Q2.4 4.8 2 4.2" fill="none" stroke="#fff" stroke-width="0.65"/></svg>
<span style="left:345.6px;top:95px;color:#2a2a2a;transform:scaleX(0.9274);transform-origin:0 0;">Sampler_flt0_wrap000</span>
<span style="left:405.8px;top:95px;color:#2a2a2a;transform:scaleX(0.8992);transform-origin:0 0;">Sampler 1</span>
<span style="left:494.9px;top:95px;color:#2a2a2a;transform:scaleX(0.9103);transform-origin:0 0;">R:Repeat, S:Repeat, T:Repeat</span>
<svg style="left:337.9px;top:102.08px" width="6" height="6" viewBox="0 0 6.4 6"><rect x="0" y="0" width="6.4" height="6" rx="0.8" fill="#6797d8"/><path d="M4.3 1.7Q3.9 1.2 3.2 1.2Q2.1 1.2 2.1 2.1Q2.1 2.8 3.2 3Q4.4 3.2 4.4 4Q4.4 4.8 3.2 4.8Q2.4 4.8 2 4.2" fill="none" stroke="#fff" stroke-width="0.65"/></svg>
<span style="left:345.6px;top:102px;color:#2a2a2a;transform:scaleX(0.9274);transform-origin:0 0;">Sampler_flt0_wrap000</span>
<span style="left:405.8px;top:102px;color:#2a2a2a;transform:scaleX(0.8992);transform-origin:0 0;">Sampler 2</span>
<span style="left:494.9px;top:102px;color:#2a2a2a;transform:scaleX(0.9103);transform-origin:0 0;">R:Repeat, S:Repeat, T:Repeat</span>
<svg style="left:337.9px;top:109.61px" width="6" height="6" viewBox="0 0 6.4 6"><rect x="0" y="0" width="6.4" height="6" rx="0.8" fill="#6797d8"/><path d="M4.3 1.7Q3.9 1.2 3.2 1.2Q2.1 1.2 2.1 2.1Q2.1 2.8 3.2 3Q4.4 3.2 4.4 4Q4.4 4.8 3.2 4.8Q2.4 4.8 2 4.2" fill="none" stroke="#fff" stroke-width="0.65"/></svg>
<span style="left:345.6px;top:110px;color:#2a2a2a;transform:scaleX(0.9274);transform-origin:0 0;">Sampler_flt0_wrap000</span>
<span style="left:405.8px;top:110px;color:#2a2a2a;transform:scaleX(0.8992);transform-origin:0 0;">Sampler 3</span>
<span style="left:494.9px;top:110px;color:#2a2a2a;transform:scaleX(0.9103);transform-origin:0 0;">R:Repeat, S:Repeat, T:Repeat</span>
<svg style="left:337.9px;top:117.14px" width="6" height="6" viewBox="0 0 6.4 6"><rect x="0" y="0" width="6.4" height="6" rx="0.8" fill="#6797d8"/><path d="M4.3 1.7Q3.9 1.2 3.2 1.2Q2.1 1.2 2.1 2.1Q2.1 2.8 3.2 3Q4.4 3.2 4.4 4Q4.4 4.8 3.2 4.8Q2.4 4.8 2 4.2" fill="none" stroke="#fff" stroke-width="0.65"/></svg>
<span style="left:345.6px;top:117px;color:#2a2a2a;transform:scaleX(0.9274);transform-origin:0 0;">Sampler_flt0_wrap000</span>
<span style="left:405.8px;top:117px;color:#2a2a2a;transform:scaleX(0.8992);transform-origin:0 0;">Sampler 4</span>
<span style="left:494.9px;top:117px;color:#2a2a2a;transform:scaleX(0.9103);transform-origin:0 0;">R:Repeat, S:Repeat, T:Repeat</span>
<svg style="left:337.9px;top:124.66999999999999px" width="6" height="6" viewBox="0 0 6.4 6"><rect x="0" y="0" width="6.4" height="6" rx="0.8" fill="#6797d8"/><path d="M4.3 1.7Q3.9 1.2 3.2 1.2Q2.1 1.2 2.1 2.1Q2.1 2.8 3.2 3Q4.4 3.2 4.4 4Q4.4 4.8 3.2 4.8Q2.4 4.8 2 4.2" fill="none" stroke="#fff" stroke-width="0.65"/></svg>
<span style="left:345.6px;top:125px;color:#2a2a2a;transform:scaleX(0.9274);transform-origin:0 0;">Sampler_flt0_wrap000</span>
<span style="left:405.8px;top:125px;color:#2a2a2a;transform:scaleX(0.8992);transform-origin:0 0;">Sampler 5</span>
<span style="left:494.9px;top:125px;color:#2a2a2a;transform:scaleX(0.9103);transform-origin:0 0;">R:Repeat, S:Repeat, T:Repeat</span>
<svg style="left:337.9px;top:132.2px" width="6" height="6" viewBox="0 0 6.4 6"><rect x="0" y="0" width="6.4" height="6" rx="0.8" fill="#6797d8"/><path d="M4.3 1.7Q3.9 1.2 3.2 1.2Q2.1 1.2 2.1 2.1Q2.1 2.8 3.2 3Q4.4 3.2 4.4 4Q4.4 4.8 3.2 4.8Q2.4 4.8 2 4.2" fill="none" stroke="#fff" stroke-width="0.65"/></svg>
<span style="left:345.6px;top:132px;color:#2a2a2a;transform:scaleX(0.9274);transform-origin:0 0;">Sampler_flt0_wrap000</span>
<span style="left:405.8px;top:132px;color:#2a2a2a;transform:scaleX(0.8992);transform-origin:0 0;">Sampler 6</span>
<span style="left:494.9px;top:132px;color:#2a2a2a;transform:scaleX(0.9103);transform-origin:0 0;">R:Repeat, S:Repeat, T:Repeat</span>
<svg style="left:337.9px;top:139.73px" width="6" height="6" viewBox="0 0 6.4 6"><rect x="0" y="0" width="6.4" height="6" rx="0.8" fill="#6797d8"/><path d="M4.3 1.7Q3.9 1.2 3.2 1.2Q2.1 1.2 2.1 2.1Q2.1 2.8 3.2 3Q4.4 3.2 4.4 4Q4.4 4.8 3.2 4.8Q2.4 4.8 2 4.2" fill="none" stroke="#fff" stroke-width="0.65"/></svg>
<span style="left:345.6px;top:140px;color:#2a2a2a;transform:scaleX(0.9274);transform-origin:0 0;">Sampler_flt0_wrap000</span>
<span style="left:405.8px;top:140px;color:#2a2a2a;transform:scaleX(0.8992);transform-origin:0 0;">Sampler 7</span>
<span style="left:494.9px;top:140px;color:#2a2a2a;transform:scaleX(0.9103);transform-origin:0 0;">R:Repeat, S:Repeat, T:Repeat</span>
<svg style="left:337.9px;top:147.26px" width="6" height="6" viewBox="0 0 6.4 6"><rect x="0" y="0" width="6.4" height="6" rx="0.8" fill="#6797d8"/><path d="M4.3 1.7Q3.9 1.2 3.2 1.2Q2.1 1.2 2.1 2.1Q2.1 2.8 3.2 3Q4.4 3.2 4.4 4Q4.4 4.8 3.2 4.8Q2.4 4.8 2 4.2" fill="none" stroke="#fff" stroke-width="0.65"/></svg>
<span style="left:345.6px;top:147px;color:#2a2a2a;transform:scaleX(0.9274);transform-origin:0 0;">Sampler_flt0_wrap000</span>
<span style="left:405.8px;top:147px;color:#2a2a2a;transform:scaleX(0.8992);transform-origin:0 0;">Sampler 8</span>
<span style="left:494.9px;top:147px;color:#2a2a2a;transform:scaleX(0.9103);transform-origin:0 0;">R:Repeat, S:Repeat, T:Repeat</span>
<svg style="left:337.9px;top:154.79px" width="6" height="6" viewBox="0 0 6.4 6"><rect x="0" y="0" width="6.4" height="6" rx="0.8" fill="#6797d8"/><path d="M4.3 1.7Q3.9 1.2 3.2 1.2Q2.1 1.2 2.1 2.1Q2.1 2.8 3.2 3Q4.4 3.2 4.4 4Q4.4 4.8 3.2 4.8Q2.4 4.8 2 4.2" fill="none" stroke="#fff" stroke-width="0.65"/></svg>
<span style="left:345.6px;top:155px;color:#2a2a2a;transform:scaleX(0.9274);transform-origin:0 0;">Sampler_flt0_wrap000</span>
<span style="left:405.8px;top:155px;color:#2a2a2a;transform:scaleX(0.8992);transform-origin:0 0;">Sampler 9</span>
<span style="left:494.9px;top:155px;color:#2a2a2a;transform:scaleX(0.9103);transform-origin:0 0;">R:Repeat, S:Repeat, T:Repeat</span>
<svg style="left:337.9px;top:162.32px" width="6" height="6" viewBox="0 0 6.4 6"><rect x="0" y="0" width="6.4" height="6" rx="0.8" fill="#6797d8"/><path d="M4.3 1.7Q3.9 1.2 3.2 1.2Q2.1 1.2 2.1 2.1Q2.1 2.8 3.2 3Q4.4 3.2 4.4 4Q4.4 4.8 3.2 4.8Q2.4 4.8 2 4.2" fill="none" stroke="#fff" stroke-width="0.65"/></svg>
<span style="left:345.6px;top:162px;color:#2a2a2a;transform:scaleX(0.9274);transform-origin:0 0;">Sampler_flt0_wrap000</span>
<span style="left:405.8px;top:162px;color:#2a2a2a;transform:scaleX(0.9227);transform-origin:0 0;">Sampler 10</span>
<span style="left:494.9px;top:162px;color:#2a2a2a;transform:scaleX(0.9103);transform-origin:0 0;">R:Repeat, S:Repeat, T:Repeat</span>
<svg style="left:337.9px;top:169.85px" width="6" height="6" viewBox="0 0 6.4 6"><rect x="0" y="0" width="6.4" height="6" rx="0.8" fill="#6797d8"/><path d="M4.3 1.7Q3.9 1.2 3.2 1.2Q2.1 1.2 2.1 2.1Q2.1 2.8 3.2 3Q4.4 3.2 4.4 4Q4.4 4.8 3.2 4.8Q2.4 4.8 2 4.2" fill="none" stroke="#fff" stroke-width="0.65"/></svg>
<span style="left:345.6px;top:170px;color:#2a2a2a;transform:scaleX(0.9274);transform-origin:0 0;">Sampler_flt0_wrap000</span>
<span style="left:405.8px;top:170px;color:#2a2a2a;transform:scaleX(0.9364);transform-origin:0 0;">Sampler 11</span>
<span style="left:494.9px;top:170px;color:#2a2a2a;transform:scaleX(0.9103);transform-origin:0 0;">R:Repeat, S:Repeat, T:Repeat</span>
<svg style="left:337.9px;top:177.38px" width="6" height="6" viewBox="0 0 6.4 6"><rect x="0" y="0" width="6.4" height="6" rx="0.8" fill="#6797d8"/><path d="M4.3 1.7Q3.9 1.2 3.2 1.2Q2.1 1.2 2.1 2.1Q2.1 2.8 3.2 3Q4.4 3.2 4.4 4Q4.4 4.8 3.2 4.8Q2.4 4.8 2 4.2" fill="none" stroke="#fff" stroke-width="0.65"/></svg>
<span style="left:345.6px;top:177px;color:#2a2a2a;transform:scaleX(0.9274);transform-origin:0 0;">Sampler_flt0_wrap000</span>
<span style="left:405.8px;top:177px;color:#2a2a2a;transform:scaleX(0.9227);transform-origin:0 0;">Sampler 12</span>
<span style="left:494.9px;top:177px;color:#2a2a2a;transform:scaleX(0.9103);transform-origin:0 0;">R:Repeat, S:Repeat, T:Repeat</span>
<svg style="left:337.9px;top:184.91px" width="6" height="6" viewBox="0 0 6.4 6"><rect x="0" y="0" width="6.4" height="6" rx="0.8" fill="#6797d8"/><path d="M4.3 1.7Q3.9 1.2 3.2 1.2Q2.1 1.2 2.1 2.1Q2.1 2.8 3.2 3Q4.4 3.2 4.4 4Q4.4 4.8 3.2 4.8Q2.4 4.8 2 4.2" fill="none" stroke="#fff" stroke-width="0.65"/></svg>
<span style="left:345.6px;top:185px;color:#2a2a2a;transform:scaleX(0.9274);transform-origin:0 0;">Sampler_flt0_wrap000</span>
<span style="left:405.8px;top:185px;color:#2a2a2a;transform:scaleX(0.9227);transform-origin:0 0;">Sampler 13</span>
<span style="left:494.9px;top:185px;color:#2a2a2a;transform:scaleX(0.9103);transform-origin:0 0;">R:Repeat, S:Repeat, T:Repeat</span>
<svg style="left:337.9px;top:192.44px" width="6" height="6" viewBox="0 0 6.4 6"><rect x="0" y="0" width="6.4" height="6" rx="0.8" fill="#6797d8"/><path d="M4.3 1.7Q3.9 1.2 3.2 1.2Q2.1 1.2 2.1 2.1Q2.1 2.8 3.2 3Q4.4 3.2 4.4 4Q4.4 4.8 3.2 4.8Q2.4 4.8 2 4.2" fill="none" stroke="#fff" stroke-width="0.65"/></svg>
<span style="left:345.6px;top:192px;color:#2a2a2a;transform:scaleX(0.9274);transform-origin:0 0;">Sampler_flt0_wrap000</span>
<span style="left:405.8px;top:192px;color:#2a2a2a;transform:scaleX(0.9227);transform-origin:0 0;">Sampler 14</span>
<span style="left:494.9px;top:192px;color:#2a2a2a;transform:scaleX(0.9103);transform-origin:0 0;">R:Repeat, S:Repeat, T:Repeat</span>
<svg style="left:337.9px;top:199.97px" width="6" height="6" viewBox="0 0 6.4 6"><rect x="0" y="0" width="6.4" height="6" rx="0.8" fill="#6797d8"/><path d="M4.3 1.7Q3.9 1.2 3.2 1.2Q2.1 1.2 2.1 2.1Q2.1 2.8 3.2 3Q4.4 3.2 4.4 4Q4.4 4.8 3.2 4.8Q2.4 4.8 2 4.2" fill="none" stroke="#fff" stroke-width="0.65"/></svg>
<span style="left:345.6px;top:200px;color:#2a2a2a;transform:scaleX(0.9274);transform-origin:0 0;">Sampler_flt0_wrap000</span>
<span style="left:405.8px;top:200px;color:#2a2a2a;transform:scaleX(0.9227);transform-origin:0 0;">Sampler 15</span>
<span style="left:494.9px;top:200px;color:#2a2a2a;transform:scaleX(0.9103);transform-origin:0 0;">R:Repeat, S:Repeat, T:Repeat</span>
<svg style="left:337.9px;top:207.5px" width="6" height="6" viewBox="0 0 6.4 6"><rect x="0" y="0" width="6.4" height="6" rx="0.8" fill="#d8a473"/><path d="M2.3 4.8V1.3H4.4M2.3 3H4" fill="none" stroke="#fff" stroke-width="0.7"/></svg>
<span style="left:345.6px;top:208px;color:#2a2a2a;transform:scaleX(0.9408);transform-origin:0 0;">xlatMtlMain</span>
<span style="left:405.8px;top:208px;color:#2a2a2a;transform:scaleX(0.9439);transform-origin:0 0;">Vertex Function</span>
<span style="left:494.9px;top:208px;color:#2a2a2a;transform:scaleX(0.9723);transform-origin:0 0;">Library 0x14408da70 (Just-In-Time)</span>
<div style="left:324px;top:214px;width:250px;height:1px;background:#e2e2e2;"></div>
<div style="left:324px;top:215px;width:250px;height:6px;background:#f5f5f5;"></div>
<div style="left:324px;top:221px;width:250px;height:1px;background:#e8e8e8;"></div>
<svg style="left:326.40000000000003px;top:216.79999999999998px" width="3.4" height="3" viewBox="0 0 3.4 3"><path d="M0 0H3.4L1.7 3Z" fill="#777"/></svg>
<span style="left:332.1px;top:216px;font-weight:bold;color:#2a2a2a;font-size:4.8px;">Fragment</span>
<svg style="left:339.3px;top:222.46px" width="2.7" height="6.2" viewBox="0 0 2.7 6.2"><rect x="0" y="0" width="2.7" height="2.9" fill="#5a5a5a"/><rect x="0" y="3.3" width="2.7" height="2.9" fill="#7f9fd2"/></svg>
<span style="left:345.6px;top:223px;color:#2a2a2a;transform:scaleX(0.9798);transform-origin:0 0;">TempBuffer 1 1125x2436</span>
<span style="left:405.8px;top:223px;color:#2a2a2a;transform:scaleX(0.9282);transform-origin:0 0;">Texture 0</span>
<span style="left:291.3px;width:200px;text-align:right;top:223px;color:#2a2a2a;transform:scaleX(0.9827);transform-origin:100% 0;">1125 × 2436</span>
<span style="left:494.9px;top:223px;color:#2a2a2a;transform:scaleX(0.8922);transform-origin:0 0;">BGRA8Unorm_sRGB [_MainTex]</span>
<svg style="left:339.3px;top:229.99px" width="2.7" height="6.2" viewBox="0 0 2.7 6.2"><rect x="0" y="0" width="2.7" height="2.9" fill="#7f9fd2"/><rect x="0" y="3.3" width="2.7" height="2.9" fill="#5a5a5a"/></svg>
<span style="left:345.6px;top:230px;color:#2a2a2a;transform:scaleX(0.9742);transform-origin:0 0;">Texture 0x13d95fe20</span>
<span style="left:405.8px;top:230px;color:#2a2a2a;transform:scaleX(0.9178);transform-origin:0 0;">Color 0</span>
<span style="left:291.3px;width:200px;text-align:right;top:230px;color:#2a2a2a;transform:scaleX(0.9827);transform-origin:100% 0;">1125 × 2436</span>
<span style="left:494.9px;top:230px;color:#2a2a2a;transform:scaleX(0.8777);transform-origin:0 0;">BGRA8Unorm_sRGB</span>
<span style="left:345.6px;top:238px;color:#2a2a2a;transform:scaleX(0.9731);transform-origin:0 0;">Texture 0x13d9400a0</span>
<span style="left:405.8px;top:238px;color:#2a2a2a;transform:scaleX(0.9143);transform-origin:0 0;">Depth</span>
<span style="left:291.3px;width:200px;text-align:right;top:238px;color:#2a2a2a;transform:scaleX(0.9827);transform-origin:100% 0;">1125 × 2436</span>
<span style="left:494.9px;top:238px;color:#2a2a2a;transform:scaleX(0.9490);transform-origin:0 0;">Depth32Float</span>
<div style="left:339px;top:245px;width:3px;height:6px;background:#050505;"></div>
<span style="left:345.6px;top:245px;color:#2a2a2a;transform:scaleX(0.9793);transform-origin:0 0;">Texture 0x13d915d80</span>
<span style="left:405.8px;top:245px;color:#2a2a2a;transform:scaleX(0.9457);transform-origin:0 0;">Stencil</span>
<span style="left:291.3px;width:200px;text-align:right;top:245px;color:#2a2a2a;transform:scaleX(0.9827);transform-origin:100% 0;">1125 × 2436</span>
<span style="left:494.9px;top:245px;color:#2a2a2a;transform:scaleX(0.9440);transform-origin:0 0;">Stencil8</span>
<div style="left:324px;top:252px;width:250px;height:7px;background:#2c64d2;"></div>
<svg style="left:337.9px;top:252.68px" width="6" height="6" viewBox="0 0 6.4 6"><rect x="0" y="0" width="6.4" height="6" rx="0.8" fill="#cb7470"/><path d="M2 1.3H3.6Q4.4 1.3 4.4 2.1Q4.4 2.7 3.8 2.85Q4.6 3 4.6 3.8Q4.6 4.7 3.7 4.7H2Z" fill="none" stroke="#fff" stroke-width="0.65"/></svg>
<span style="left:345.6px;top:253px;color:#fff;transform:scaleX(0.9521);transform-origin:0 0;">ScratchBuffer0_2</span>
<span style="left:405.8px;top:253px;color:#fff;transform:scaleX(0.9815);transform-origin:0 0;">Buffer 0</span>
<span style="left:291.3px;width:200px;text-align:right;top:253px;color:#fff;transform:scaleX(0.8825);transform-origin:100% 0;">4 MB</span>
<span style="left:494.9px;top:253px;color:#fff;transform:scaleX(0.9599);transform-origin:0 0;">Offset: 0x1c0 [FGlobals]</span>
<svg style="left:337.9px;top:260.21px" width="6" height="6" viewBox="0 0 6.4 6"><rect x="0" y="0" width="6.4" height="6" rx="0.8" fill="#6797d8"/><path d="M4.3 1.7Q3.9 1.2 3.2 1.2Q2.1 1.2 2.1 2.1Q2.1 2.8 3.2 3Q4.4 3.2 4.4 4Q4.4 4.8 3.2 4.8Q2.4 4.8 2 4.2" fill="none" stroke="#fff" stroke-width="0.65"/></svg>
<span style="left:345.6px;top:260px;color:#2a2a2a;transform:scaleX(0.9230);transform-origin:0 0;">Sampler_flt1_wrap111</span>
<span style="left:405.8px;top:260px;color:#2a2a2a;transform:scaleX(0.8992);transform-origin:0 0;">Sampler 0</span>
<span style="left:494.9px;top:260px;color:#2a2a2a;transform:scaleX(0.8959);transform-origin:0 0;">R:ClampToEdge, S:ClampToEdge, T:...</span>
<svg style="left:337.9px;top:267.74px" width="6" height="6" viewBox="0 0 6.4 6"><rect x="0" y="0" width="6.4" height="6" rx="0.8" fill="#6797d8"/><path d="M4.3 1.7Q3.9 1.2 3.2 1.2Q2.1 1.2 2.1 2.1Q2.1 2.8 3.2 3Q4.4 3.2 4.4 4Q4.4 4.8 3.2 4.8Q2.4 4.8 2 4.2" fill="none" stroke="#fff" stroke-width="0.65"/></svg>
<span style="left:345.6px;top:268px;color:#2a2a2a;transform:scaleX(0.9274);transform-origin:0 0;">Sampler_flt0_wrap000</span>
<span style="left:405.8px;top:268px;color:#2a2a2a;transform:scaleX(0.8992);transform-origin:0 0;">Sampler 1</span>
<span style="left:494.9px;top:268px;color:#2a2a2a;transform:scaleX(0.9103);transform-origin:0 0;">R:Repeat, S:Repeat, T:Repeat</span>
<svg style="left:337.9px;top:275.27px" width="6" height="6" viewBox="0 0 6.4 6"><rect x="0" y="0" width="6.4" height="6" rx="0.8" fill="#6797d8"/><path d="M4.3 1.7Q3.9 1.2 3.2 1.2Q2.1 1.2 2.1 2.1Q2.1 2.8 3.2 3Q4.4 3.2 4.4 4Q4.4 4.8 3.2 4.8Q2.4 4.8 2 4.2" fill="none" stroke="#fff" stroke-width="0.65"/></svg>
<span style="left:345.6px;top:275px;color:#2a2a2a;transform:scaleX(0.9274);transform-origin:0 0;">Sampler_flt0_wrap000</span>
<span style="left:405.8px;top:275px;color:#2a2a2a;transform:scaleX(0.8992);transform-origin:0 0;">Sampler 2</span>
<span style="left:494.9px;top:275px;color:#2a2a2a;transform:scaleX(0.9103);transform-origin:0 0;">R:Repeat, S:Repeat, T:Repeat</span>
<div style="left:324px;top:277px;width:250px;height:1px;background:#e4e4e4;"></div>
<div style="left:130px;top:278px;width:444px;height:10px;background:#f4f4f4;"></div>
<div style="left:131.5px;top:278.2px;width:190.2px;height:8.6px;background:#f0f0f0;border-radius:1px;box-shadow:inset 0 0 0 0.5px #e4e4e4;"></div>
<svg style="left:133.8px;top:279.8px" width="10.4" height="5" viewBox="0 0 10.4 5"><rect x="0.3" y="0.3" width="9.8" height="4.4" rx="2.2" fill="#fdfdfd" stroke="#a8a8a8" stroke-width="0.55"/><path d="M2 1.4H4.2L3.4 2.6V3.7L2.8 3.4V2.6Z" fill="#8a8a8a"/><path d="M6.1 2.1H8.1L7.1 3.1Z" fill="#444"/></svg>
<span style="left:145.9px;top:281px;color:#c4c4c4;font-size:4.8px;transform:scaleX(0.9370);transform-origin:0 0;">Filter</span>
<div style="left:323px;top:278px;width:1px;height:10px;background:#e0e0e0;"></div>
<div style="left:325.0px;top:278.2px;width:247.6px;height:8.6px;background:#f0f0f0;border-radius:1px;box-shadow:inset 0 0 0 0.5px #e4e4e4;"></div>
<svg style="left:327.2px;top:279.8px" width="10.4" height="5" viewBox="0 0 10.4 5"><rect x="0.3" y="0.3" width="9.8" height="4.4" rx="2.2" fill="#fdfdfd" stroke="#a8a8a8" stroke-width="0.55"/><path d="M2 1.4H4.2L3.4 2.6V3.7L2.8 3.4V2.6Z" fill="#8a8a8a"/><path d="M6.1 2.1H8.1L7.1 3.1Z" fill="#444"/></svg>
<span style="left:339.4px;top:281px;color:#c4c4c4;font-size:4.8px;transform:scaleX(0.9370);transform-origin:0 0;">Filter</span>
<div style="left:130px;top:288px;width:444px;height:132px;background:#fff;"></div>
<div style="left:130px;top:288px;width:444px;height:1px;background:#d6d6d6;"></div>
<div style="left:130px;top:289px;width:444px;height:10px;background:#f3f3f3;"></div>
<div style="left:130px;top:299px;width:444px;height:1px;background:#dedede;"></div>
<svg style="left:133.3px;top:290.9px" width="6.8" height="5.8" viewBox="0 0 6.8 5.8"><rect x="0.35" y="0.35" width="6.1" height="5.1" rx="0.7" fill="none" stroke="#8c8c8c" stroke-width="0.6"/><path d="M2.2 2.2L3.4 3.4L4.6 2.2" fill="none" stroke="#666" stroke-width="0.55"/></svg>
<svg style="left:145.9px;top:292.0px" width="6.6" height="4.0" viewBox="0 0 6.6 4.0"><path d="M0 0.5Q0 0 0.5 0H5L6.6 2L5 4H0.5Q0 4 0 3.5Z" fill="#3a82f6"/></svg>
<div style="left:156px;top:291px;width:1px;height:6px;background:#d6d6d6;"></div>
<svg style="left:158px;top:291.0px" width="6.6" height="5.6" viewBox="0 0 6.6 5.6"><path d="M0.5 0.4V5.2M1.9 0.4V5.2" stroke="#8a8a8a" stroke-width="0.7"/><path d="M3 1.2L6 2.8L3 4.4" fill="none" stroke="#666" stroke-width="0.65"/></svg>
<div style="left:168px;top:291px;width:1px;height:6px;background:#d6d6d6;"></div>
<span style="left:170.9px;top:292px;color:#2a2a2a;font-size:4.8px;transform:scaleX(1.0036);transform-origin:0 0;">No Selection</span>
<svg style="left:355.6px;top:291.1px" width="4.6" height="5.6" viewBox="0 0 4.6 5.6"><rect x="0" y="0" width="4.6" height="5.6" rx="0.4" fill="#c4c4c4"/><path d="M0.8 1.6H3.8M0.8 2.8H3.8M0.8 4H3.8" stroke="#e8e8e8" stroke-width="0.4"/></svg>
<svg style="left:367.8px;top:291.2px" width="6.6" height="5.2" viewBox="0 0 6.6 5.2"><path d="M2.4 0.6L0.3 2.6L2.4 4.6Z" fill="#555"/><path d="M3.4 0.5V4.7M4.7 0.5V4.7M6 0.5V4.7" stroke="#555" stroke-width="0.65"/></svg>
<svg style="left:380px;top:291.2px" width="6.4" height="5.2" viewBox="0 0 6.4 5.2"><path d="M0.5 0.5V4.7M1.8 0.5V4.7" stroke="#b0b0b0" stroke-width="0.6"/><path d="M3 0.6L6 2.6L3 4.6Z" fill="none" stroke="#b0b0b0" stroke-width="0.55"/></svg>
<div style="left:392px;top:293px;width:176px;height:2px;background:#dcdcdc;border-radius:1px;"></div>
<svg style="left:565.4px;top:290.6px" width="6.6" height="6.6" viewBox="0 0 6.6 6.6"><circle cx="3.3" cy="3.3" r="2.75" fill="#fff" stroke="#d0d0d0" stroke-width="0.35"/></svg>
<div style="left:392px;top:300px;width:1px;height:109px;background:#e0e0e0;"></div>
<svg style="left:133.29999999999998px;top:301.6px" width="3" height="3.4" viewBox="0 0 3 3.4"><path d="M0 0L3 1.7L0 3.4Z" fill="#8a8a8a"/></svg>
<svg style="left:138.2px;top:300.7px" width="5.8" height="5.4" viewBox="0 0 6.4 6"><rect x="0" y="0" width="6.4" height="6" rx="0.8" fill="#dcae80"/><path d="M2.3 4.8V1.3H4.4M2.3 3H4" fill="none" stroke="#fff" stroke-width="0.7"/></svg>
<span style="left:145.1px;top:301px;font-weight:bold;color:#1e1e1e;font-size:4.8px;transform:scaleX(0.9152);transform-origin:0 0;">&quot;Hidden/BlitCopy&quot; (0x13d96bea0)</span>
<span style="left:217.7px;top:301px;font-style:italic;color:#2a40c8;font-size:4.8px;transform:scaleX(1.1159);transform-origin:0 0;">xlatMtlMain - xlatMtlMain</span>
<svg style="left:133.29999999999998px;top:308.8px" width="3" height="3.4" viewBox="0 0 3 3.4"><path d="M0 0L3 1.7L0 3.4Z" fill="#8a8a8a"/></svg>
<svg style="left:138.2px;top:307.9px" width="5.8" height="5.4" viewBox="0 0 6.4 6"><rect x="0" y="0" width="6.4" height="6" rx="0.8" fill="#dcae80"/><path d="M1.5 4.6L4.6 1.4V4.6Z" fill="#fff" opacity="0.9"/></svg>
<span style="left:145.1px;top:309px;font-weight:bold;color:#1e1e1e;font-size:4.8px;transform:scaleX(0.9147);transform-origin:0 0;">RenderPipeline Performance</span>
<span style="left:208.0px;top:309px;color:#8a8a8a;font-size:4.6px;transform:scaleX(0.8486);transform-origin:0 0;">1.58 ms (47.5%)</span>
<svg style="left:133.29999999999998px;top:316.0px" width="3" height="3.4" viewBox="0 0 3 3.4"><path d="M0 0L3 1.7L0 3.4Z" fill="#8a8a8a"/></svg>
<svg style="left:138.2px;top:315.09999999999997px" width="5.8" height="5.4" viewBox="0 0 6.4 6"><rect x="0" y="0" width="6.4" height="6" rx="0.8" fill="#cc7a78"/><path d="M2 1.3H3.6Q4.4 1.3 4.4 2.1Q4.4 2.7 3.8 2.85Q4.6 3 4.6 3.8Q4.6 4.7 3.7 4.7H2Z" fill="none" stroke="#fff" stroke-width="0.65"/></svg>
<span style="left:145.1px;top:316px;font-weight:bold;color:#1e1e1e;font-size:4.8px;transform:scaleX(1.0130);transform-origin:0 0;">Vertex Buffer 0</span>
<span style="left:181.4px;top:316px;color:#8a8a8a;font-size:4.6px;transform:scaleX(0.9008);transform-origin:0 0;">(MTLBuffer)</span>
<span style="left:205.7px;top:316px;font-style:italic;color:#2a40c8;font-size:4.8px;transform:scaleX(1.0271);transform-origin:0 0;">&quot;ScratchBuffer0_2&quot; (0x13e87f440), Offset=0x00000100</span>
<svg style="left:133.29999999999998px;top:323.20000000000005px" width="3" height="3.4" viewBox="0 0 3 3.4"><path d="M0 0L3 1.7L0 3.4Z" fill="#8a8a8a"/></svg>
<svg style="left:138.2px;top:322.3px" width="5.8" height="5.4" viewBox="0 0 6.4 6"><rect x="0" y="0" width="6.4" height="6" rx="0.8" fill="#cc7a78"/><path d="M2 1.3H3.6Q4.4 1.3 4.4 2.1Q4.4 2.7 3.8 2.85Q4.6 3 4.6 3.8Q4.6 4.7 3.7 4.7H2Z" fill="none" stroke="#fff" stroke-width="0.65"/></svg>
<span style="left:145.1px;top:323px;font-weight:bold;color:#1e1e1e;font-size:4.8px;transform:scaleX(1.0130);transform-origin:0 0;">Vertex Buffer 1</span>
<span style="left:181.4px;top:323px;color:#8a8a8a;font-size:4.6px;transform:scaleX(0.9008);transform-origin:0 0;">(MTLBuffer)</span>
<span style="left:205.7px;top:323px;font-style:italic;color:#2a40c8;font-size:4.8px;transform:scaleX(1.0271);transform-origin:0 0;">&quot;ScratchBuffer0_2&quot; (0x13e87f440), Offset=0x00040010</span>
<svg style="left:133.29999999999998px;top:330.40000000000003px" width="3" height="3.4" viewBox="0 0 3 3.4"><path d="M0 0L3 1.7L0 3.4Z" fill="#8a8a8a"/></svg>
<svg style="left:138.2px;top:329.5px" width="5.8" height="5.4" viewBox="0 0 6.4 6"><rect x="0" y="0" width="6.4" height="6" rx="0.8" fill="#6da26f"/><path d="M4.3 1.7Q3.9 1.2 3.2 1.2Q2.1 1.2 2.1 2.1Q2.1 2.8 3.2 3Q4.4 3.2 4.4 4Q4.4 4.8 3.2 4.8Q2.4 4.8 2 4.2" fill="none" stroke="#fff" stroke-width="0.65"/></svg>
<span style="left:145.7px;top:330px;font-weight:bold;color:#1e1e1e;font-size:4.8px;transform:scaleX(0.9981);transform-origin:0 0;">Vertex Sampler 0</span>
<span style="left:186.3px;top:330px;color:#8a8a8a;font-size:4.6px;transform:scaleX(0.8630);transform-origin:0 0;">(MTLSamplerState)</span>
<span style="left:223.7px;top:330px;font-style:italic;color:#2a40c8;font-size:4.8px;transform:scaleX(0.9986);transform-origin:0 0;">&quot;Sampler_flt0_wrap000&quot; (0x1d408db60)</span>
<svg style="left:133.29999999999998px;top:337.6px" width="3" height="3.4" viewBox="0 0 3 3.4"><path d="M0 0L3 1.7L0 3.4Z" fill="#8a8a8a"/></svg>
<svg style="left:138.2px;top:336.7px" width="5.8" height="5.4" viewBox="0 0 6.4 6"><rect x="0" y="0" width="6.4" height="6" rx="0.8" fill="#6da26f"/><path d="M4.3 1.7Q3.9 1.2 3.2 1.2Q2.1 1.2 2.1 2.1Q2.1 2.8 3.2 3Q4.4 3.2 4.4 4Q4.4 4.8 3.2 4.8Q2.4 4.8 2 4.2" fill="none" stroke="#fff" stroke-width="0.65"/></svg>
<span style="left:145.7px;top:337px;font-weight:bold;color:#1e1e1e;font-size:4.8px;transform:scaleX(0.9981);transform-origin:0 0;">Vertex Sampler 1</span>
<span style="left:186.3px;top:337px;color:#8a8a8a;font-size:4.6px;transform:scaleX(0.8630);transform-origin:0 0;">(MTLSamplerState)</span>
<span style="left:223.7px;top:337px;font-style:italic;color:#2a40c8;font-size:4.8px;transform:scaleX(0.9986);transform-origin:0 0;">&quot;Sampler_flt0_wrap000&quot; (0x1d408db60)</span>
<svg style="left:133.29999999999998px;top:344.8px" width="3" height="3.4" viewBox="0 0 3 3.4"><path d="M0 0L3 1.7L0 3.4Z" fill="#8a8a8a"/></svg>
<svg style="left:138.2px;top:343.9px" width="5.8" height="5.4" viewBox="0 0 6.4 6"><rect x="0" y="0" width="6.4" height="6" rx="0.8" fill="#6da26f"/><path d="M4.3 1.7Q3.9 1.2 3.2 1.2Q2.1 1.2 2.1 2.1Q2.1 2.8 3.2 3Q4.4 3.2 4.4 4Q4.4 4.8 3.2 4.8Q2.4 4.8 2 4.2" fill="none" stroke="#fff" stroke-width="0.65"/></svg>
<span style="left:145.7px;top:345px;font-weight:bold;color:#1e1e1e;font-size:4.8px;transform:scaleX(0.9981);transform-origin:0 0;">Vertex Sampler 2</span>
<span style="left:186.3px;top:345px;color:#8a8a8a;font-size:4.6px;transform:scaleX(0.8630);transform-origin:0 0;">(MTLSamplerState)</span>
<span style="left:223.7px;top:345px;font-style:italic;color:#2a40c8;font-size:4.8px;transform:scaleX(0.9986);transform-origin:0 0;">&quot;Sampler_flt0_wrap000&quot; (0x1d408db60)</span>
<svg style="left:133.29999999999998px;top:352.0px" width="3" height="3.4" viewBox="0 0 3 3.4"><path d="M0 0L3 1.7L0 3.4Z" fill="#8a8a8a"/></svg>
<svg style="left:138.2px;top:351.09999999999997px" width="5.8" height="5.4" viewBox="0 0 6.4 6"><rect x="0" y="0" width="6.4" height="6" rx="0.8" fill="#6da26f"/><path d="M4.3 1.7Q3.9 1.2 3.2 1.2Q2.1 1.2 2.1 2.1Q2.1 2.8 3.2 3Q4.4 3.2 4.4 4Q4.4 4.8 3.2 4.8Q2.4 4.8 2 4.2" fill="none" stroke="#fff" stroke-width="0.65"/></svg>
<span style="left:145.7px;top:352px;font-weight:bold;color:#1e1e1e;font-size:4.8px;transform:scaleX(0.9981);transform-origin:0 0;">Vertex Sampler 3</span>
<span style="left:186.3px;top:352px;color:#8a8a8a;font-size:4.6px;transform:scaleX(0.8630);transform-origin:0 0;">(MTLSamplerState)</span>
<span style="left:223.7px;top:352px;font-style:italic;color:#2a40c8;font-size:4.8px;transform:scaleX(0.9986);transform-origin:0 0;">&quot;Sampler_flt0_wrap000&quot; (0x1d408db60)</span>
<svg style="left:133.29999999999998px;top:359.20000000000005px" width="3" height="3.4" viewBox="0 0 3 3.4"><path d="M0 0L3 1.7L0 3.4Z" fill="#8a8a8a"/></svg>
<svg style="left:138.2px;top:358.3px" width="5.8" height="5.4" viewBox="0 0 6.4 6"><rect x="0" y="0" width="6.4" height="6" rx="0.8" fill="#6da26f"/><path d="M4.3 1.7Q3.9 1.2 3.2 1.2Q2.1 1.2 2.1 2.1Q2.1 2.8 3.2 3Q4.4 3.2 4.4 4Q4.4 4.8 3.2 4.8Q2.4 4.8 2 4.2" fill="none" stroke="#fff" stroke-width="0.65"/></svg>
<span style="left:145.7px;top:359px;font-weight:bold;color:#1e1e1e;font-size:4.8px;transform:scaleX(0.9981);transform-origin:0 0;">Vertex Sampler 4</span>
<span style="left:186.3px;top:359px;color:#8a8a8a;font-size:4.6px;transform:scaleX(0.8630);transform-origin:0 0;">(MTLSamplerState)</span>
<span style="left:223.7px;top:359px;font-style:italic;color:#2a40c8;font-size:4.8px;transform:scaleX(0.9986);transform-origin:0 0;">&quot;Sampler_flt0_wrap000&quot; (0x1d408db60)</span>
<svg style="left:133.29999999999998px;top:366.40000000000003px" width="3" height="3.4" viewBox="0 0 3 3.4"><path d="M0 0L3 1.7L0 3.4Z" fill="#8a8a8a"/></svg>
<svg style="left:138.2px;top:365.5px" width="5.8" height="5.4" viewBox="0 0 6.4 6"><rect x="0" y="0" width="6.4" height="6" rx="0.8" fill="#6da26f"/><path d="M4.3 1.7Q3.9 1.2 3.2 1.2Q2.1 1.2 2.1 2.1Q2.1 2.8 3.2 3Q4.4 3.2 4.4 4Q4.4 4.8 3.2 4.8Q2.4 4.8 2 4.2" fill="none" stroke="#fff" stroke-width="0.65"/></svg>
<span style="left:145.7px;top:366px;font-weight:bold;color:#1e1e1e;font-size:4.8px;transform:scaleX(0.9981);transform-origin:0 0;">Vertex Sampler 5</span>
<span style="left:186.3px;top:366px;color:#8a8a8a;font-size:4.6px;transform:scaleX(0.8630);transform-origin:0 0;">(MTLSamplerState)</span>
<span style="left:223.7px;top:366px;font-style:italic;color:#2a40c8;font-size:4.8px;transform:scaleX(0.9986);transform-origin:0 0;">&quot;Sampler_flt0_wrap000&quot; (0x1d408db60)</span>
<svg style="left:133.29999999999998px;top:373.6px" width="3" height="3.4" viewBox="0 0 3 3.4"><path d="M0 0L3 1.7L0 3.4Z" fill="#8a8a8a"/></svg>
<svg style="left:138.2px;top:372.7px" width="5.8" height="5.4" viewBox="0 0 6.4 6"><rect x="0" y="0" width="6.4" height="6" rx="0.8" fill="#6da26f"/><path d="M4.3 1.7Q3.9 1.2 3.2 1.2Q2.1 1.2 2.1 2.1Q2.1 2.8 3.2 3Q4.4 3.2 4.4 4Q4.4 4.8 3.2 4.8Q2.4 4.8 2 4.2" fill="none" stroke="#fff" stroke-width="0.65"/></svg>
<span style="left:145.7px;top:373px;font-weight:bold;color:#1e1e1e;font-size:4.8px;transform:scaleX(0.9981);transform-origin:0 0;">Vertex Sampler 6</span>
<span style="left:186.3px;top:373px;color:#8a8a8a;font-size:4.6px;transform:scaleX(0.8630);transform-origin:0 0;">(MTLSamplerState)</span>
<span style="left:223.7px;top:373px;font-style:italic;color:#2a40c8;font-size:4.8px;transform:scaleX(0.9986);transform-origin:0 0;">&quot;Sampler_flt0_wrap000&quot; (0x1d408db60)</span>
<svg style="left:133.29999999999998px;top:380.8px" width="3" height="3.4" viewBox="0 0 3 3.4"><path d="M0 0L3 1.7L0 3.4Z" fill="#8a8a8a"/></svg>
<svg style="left:138.2px;top:379.9px" width="5.8" height="5.4" viewBox="0 0 6.4 6"><rect x="0" y="0" width="6.4" height="6" rx="0.8" fill="#6da26f"/><path d="M4.3 1.7Q3.9 1.2 3.2 1.2Q2.1 1.2 2.1 2.1Q2.1 2.8 3.2 3Q4.4 3.2 4.4 4Q4.4 4.8 3.2 4.8Q2.4 4.8 2 4.2" fill="none" stroke="#fff" stroke-width="0.65"/></svg>
<span style="left:145.7px;top:381px;font-weight:bold;color:#1e1e1e;font-size:4.8px;transform:scaleX(0.9981);transform-origin:0 0;">Vertex Sampler 7</span>
<span style="left:186.3px;top:381px;color:#8a8a8a;font-size:4.6px;transform:scaleX(0.8630);transform-origin:0 0;">(MTLSamplerState)</span>
<span style="left:223.7px;top:381px;font-style:italic;color:#2a40c8;font-size:4.8px;transform:scaleX(0.9986);transform-origin:0 0;">&quot;Sampler_flt0_wrap000&quot; (0x1d408db60)</span>
<svg style="left:133.29999999999998px;top:388.00000000000006px" width="3" height="3.4" viewBox="0 0 3 3.4"><path d="M0 0L3 1.7L0 3.4Z" fill="#8a8a8a"/></svg>
<svg style="left:138.2px;top:387.1px" width="5.8" height="5.4" viewBox="0 0 6.4 6"><rect x="0" y="0" width="6.4" height="6" rx="0.8" fill="#6da26f"/><path d="M4.3 1.7Q3.9 1.2 3.2 1.2Q2.1 1.2 2.1 2.1Q2.1 2.8 3.2 3Q4.4 3.2 4.4 4Q4.4 4.8 3.2 4.8Q2.4 4.8 2 4.2" fill="none" stroke="#fff" stroke-width="0.65"/></svg>
<span style="left:145.7px;top:388px;font-weight:bold;color:#1e1e1e;font-size:4.8px;transform:scaleX(0.9981);transform-origin:0 0;">Vertex Sampler 8</span>
<span style="left:186.3px;top:388px;color:#8a8a8a;font-size:4.6px;transform:scaleX(0.8630);transform-origin:0 0;">(MTLSamplerState)</span>
<span style="left:223.7px;top:388px;font-style:italic;color:#2a40c8;font-size:4.8px;transform:scaleX(0.9986);transform-origin:0 0;">&quot;Sampler_flt0_wrap000&quot; (0x1d408db60)</span>
<svg style="left:133.29999999999998px;top:395.20000000000005px" width="3" height="3.4" viewBox="0 0 3 3.4"><path d="M0 0L3 1.7L0 3.4Z" fill="#8a8a8a"/></svg>
<svg style="left:138.2px;top:394.3px" width="5.8" height="5.4" viewBox="0 0 6.4 6"><rect x="0" y="0" width="6.4" height="6" rx="0.8" fill="#6da26f"/><path d="M4.3 1.7Q3.9 1.2 3.2 1.2Q2.1 1.2 2.1 2.1Q2.1 2.8 3.2 3Q4.4 3.2 4.4 4Q4.4 4.8 3.2 4.8Q2.4 4.8 2 4.2" fill="none" stroke="#fff" stroke-width="0.65"/></svg>
<span style="left:145.7px;top:395px;font-weight:bold;color:#1e1e1e;font-size:4.8px;transform:scaleX(0.9981);transform-origin:0 0;">Vertex Sampler 9</span>
<span style="left:186.3px;top:395px;color:#8a8a8a;font-size:4.6px;transform:scaleX(0.8630);transform-origin:0 0;">(MTLSamplerState)</span>
<span style="left:223.7px;top:395px;font-style:italic;color:#2a40c8;font-size:4.8px;transform:scaleX(0.9986);transform-origin:0 0;">&quot;Sampler_flt0_wrap000&quot; (0x1d408db60)</span>
<svg style="left:133.29999999999998px;top:402.40000000000003px" width="3" height="3.4" viewBox="0 0 3 3.4"><path d="M0 0L3 1.7L0 3.4Z" fill="#8a8a8a"/></svg>
<svg style="left:138.2px;top:401.5px" width="5.8" height="5.4" viewBox="0 0 6.4 6"><rect x="0" y="0" width="6.4" height="6" rx="0.8" fill="#6da26f"/><path d="M4.3 1.7Q3.9 1.2 3.2 1.2Q2.1 1.2 2.1 2.1Q2.1 2.8 3.2 3Q4.4 3.2 4.4 4Q4.4 4.8 3.2 4.8Q2.4 4.8 2 4.2" fill="none" stroke="#fff" stroke-width="0.65"/></svg>
<span style="left:145.7px;top:402px;font-weight:bold;color:#1e1e1e;font-size:4.8px;transform:scaleX(0.9965);transform-origin:0 0;">Vertex Sampler 10</span>
<span style="left:188.6px;top:402px;color:#8a8a8a;font-size:4.6px;transform:scaleX(0.8929);transform-origin:0 0;">(MTLSamplerState)</span>
<span style="left:226.9px;top:402px;font-style:italic;color:#2a40c8;font-size:4.8px;transform:scaleX(0.9986);transform-origin:0 0;">&quot;Sampler_flt0_wrap000&quot; (0x1d408db60)</span>
<svg style="left:133.29999999999998px;top:409.6px" width="3" height="3.4" viewBox="0 0 3 3.4"><path d="M0 0L3 1.7L0 3.4Z" fill="#8a8a8a"/></svg>
<svg style="left:138.2px;top:408.7px" width="5.8" height="5.4" viewBox="0 0 6.4 6"><rect x="0" y="0" width="6.4" height="6" rx="0.8" fill="#6da26f"/><path d="M4.3 1.7Q3.9 1.2 3.2 1.2Q2.1 1.2 2.1 2.1Q2.1 2.8 3.2 3Q4.4 3.2 4.4 4Q4.4 4.8 3.2 4.8Q2.4 4.8 2 4.2" fill="none" stroke="#fff" stroke-width="0.65"/></svg>
<span style="left:145.7px;top:409px;font-weight:bold;color:#1e1e1e;font-size:4.8px;transform:scaleX(1.0030);transform-origin:0 0;">Vertex Sampler 11</span>
<span style="left:188.6px;top:409px;color:#8a8a8a;font-size:4.6px;transform:scaleX(0.8929);transform-origin:0 0;">(MTLSamplerState)</span>
<span style="left:226.9px;top:409px;font-style:italic;color:#2a40c8;font-size:4.8px;transform:scaleX(0.9986);transform-origin:0 0;">&quot;Sampler_flt0_wrap000&quot; (0x1d408db60)</span>
<div style="left:392px;top:300px;width:182px;height:109px;background:#fff;"></div>
<div style="left:392px;top:300px;width:1px;height:109px;background:#e0e0e0;"></div>
<span class="m" style="left:394.8px;top:300.30px;font-size:5.2px;font-weight:bold;color:#222;transform:scaleX(0.863);transform-origin:0 0;-webkit-text-stroke-width:0.12px;">-&gt; applicationDidFinishLaunching()</span>
<span class="m" style="left:394.8px;top:305.44px;font-size:5.2px;font-weight:bold;color:#222;transform:scaleX(0.863);transform-origin:0 0;-webkit-text-stroke-width:0.12px;">2018-05-10 16:42:04.883339-0700 ProductName[24581:3405543] Metal</span>
<span class="m" style="left:394.8px;top:310.58px;font-size:5.2px;font-weight:bold;color:#222;transform:scaleX(0.863);transform-origin:0 0;-webkit-text-stroke-width:0.12px;">GPU Frame Capture Enabled</span>
<span class="m" style="left:394.8px;top:315.72px;font-size:5.2px;font-weight:bold;color:#222;transform:scaleX(0.863);transform-origin:0 0;-webkit-text-stroke-width:0.12px;">2018-05-10 16:42:04.883699-0700 ProductName[24581:3405543] Metal</span>
<span class="m" style="left:394.8px;top:320.86px;font-size:5.2px;font-weight:bold;color:#222;transform:scaleX(0.863);transform-origin:0 0;-webkit-text-stroke-width:0.12px;">API Validation Disabled</span>
<span class="m" style="left:394.8px;top:326.00px;font-size:5.2px;font-weight:bold;color:#222;transform:scaleX(0.863);transform-origin:0 0;-webkit-text-stroke-width:0.12px;">-&gt; applicationDidBecomeActive()</span>
<span class="m" style="left:394.8px;top:331.14px;font-size:5.2px;font-weight:bold;color:#222;transform:scaleX(0.863);transform-origin:0 0;-webkit-text-stroke-width:0.12px;">GfxDevice: creating device client; threaded=1</span>
<span class="m" style="left:394.8px;top:336.28px;font-size:5.2px;font-weight:bold;color:#222;transform:scaleX(0.863);transform-origin:0 0;-webkit-text-stroke-width:0.12px;">Initializing Metal device caps: Apple A11 GPU</span>
<span class="m" style="left:394.8px;top:341.42px;font-size:5.2px;font-weight:bold;color:#222;transform:scaleX(0.863);transform-origin:0 0;-webkit-text-stroke-width:0.12px;">Initialize engine version: 2018.1.0b13 (43de91b8ac41)</span>
<span class="m" style="left:394.8px;top:346.56px;font-size:5.2px;font-weight:bold;color:#222;transform:scaleX(0.863);transform-origin:0 0;-webkit-text-stroke-width:0.12px;">UnloadTime: 0.000833 ms</span>
<span class="m" style="left:394.8px;top:351.70px;font-size:5.2px;font-weight:bold;color:#222;transform:scaleX(0.863);transform-origin:0 0;-webkit-text-stroke-width:0.12px;">2018-05-10 16:42:10.161781-0700 ProductName[24581:3405714]</span>
<span class="m" style="left:394.8px;top:356.84px;font-size:5.2px;font-weight:bold;color:#222;transform:scaleX(0.863);transform-origin:0 0;-webkit-text-stroke-width:0.12px;">[BoringSSL] Function boringssl_session_errorlog: line 2881</span>
<span class="m" style="left:394.8px;top:361.98px;font-size:5.2px;font-weight:bold;color:#222;transform:scaleX(0.863);transform-origin:0 0;-webkit-text-stroke-width:0.12px;">[boringssl_session_read] SSL_ERROR_ZERO_RETURN(6): operation</span>
<span class="m" style="left:394.8px;top:367.12px;font-size:5.2px;font-weight:bold;color:#222;transform:scaleX(0.863);transform-origin:0 0;-webkit-text-stroke-width:0.12px;">failed because the connection was cleanly shut down with a</span>
<span class="m" style="left:394.8px;top:372.26px;font-size:5.2px;font-weight:bold;color:#222;transform:scaleX(0.863);transform-origin:0 0;-webkit-text-stroke-width:0.12px;">close_notify alert</span>
<span class="m" style="left:394.8px;top:377.40px;font-size:5.2px;font-weight:bold;color:#222;transform:scaleX(0.863);transform-origin:0 0;-webkit-text-stroke-width:0.12px;">2018-05-10 16:42:10.161976-0700 ProductName[24581:3405714]</span>
<span class="m" style="left:394.8px;top:382.54px;font-size:5.2px;font-weight:bold;color:#222;transform:scaleX(0.863);transform-origin:0 0;-webkit-text-stroke-width:0.12px;">[BoringSSL] Function boringssl_session_errorlog: line 2881</span>
<span class="m" style="left:394.8px;top:387.68px;font-size:5.2px;font-weight:bold;color:#222;transform:scaleX(0.863);transform-origin:0 0;-webkit-text-stroke-width:0.12px;">[boringssl_session_read] SSL_ERROR_ZERO_RETURN(6): operation</span>
<span class="m" style="left:394.8px;top:392.82px;font-size:5.2px;font-weight:bold;color:#222;transform:scaleX(0.863);transform-origin:0 0;-webkit-text-stroke-width:0.12px;">failed because the connection was cleanly shut down with a</span>
<span class="m" style="left:394.8px;top:397.96px;font-size:5.2px;font-weight:bold;color:#222;transform:scaleX(0.863);transform-origin:0 0;-webkit-text-stroke-width:0.12px;">close_notify alert</span>
<div style="left:130px;top:409px;width:444px;height:1px;background:#e2e2e2;"></div>
<div style="left:130px;top:410px;width:444px;height:10px;background:#fff;"></div>
<span style="left:134px;top:413px;color:#444;font-size:4.8px;transform:scaleX(1.0025);transform-origin:0 0;">Auto</span>
<svg style="left:145.2px;top:412.4px" width="2.8" height="4.8" viewBox="0 0 2.8 4.8"><path d="M0.3 1.8L1.4 0.5L2.5 1.8M0.3 3L1.4 4.3L2.5 3" fill="none" stroke="#666" stroke-width="0.5"/></svg>
<div style="left:151px;top:412px;width:1px;height:6px;background:#e4e4e4;"></div>
<svg style="left:153.3px;top:411.9px" width="6.4" height="5.6" viewBox="0 0 6.4 5.6"><path d="M3.2 0.4L6 2.8L3.2 5.2L0.4 2.8Z" fill="none" stroke="#c4c4c4" stroke-width="0.5"/><path d="M1.8 1.6L4.6 4M4.6 1.6L1.8 4" stroke="#c4c4c4" stroke-width="0.4"/></svg>
<div style="left:321.8px;top:410.2px;width:68.8px;height:9px;background:#efefef;border-radius:1.2px;"></div>
<svg style="left:323.8px;top:412.2px" width="5.2" height="5.2" viewBox="0 0 5.2 5.2"><circle cx="2.6" cy="2.6" r="2.2" fill="none" stroke="#bbb" stroke-width="0.5"/><path d="M1.5 1.7H3.7L2.9 2.7V3.6L2.3 3.3V2.7Z" fill="#bbb"/></svg>
<span style="left:330.4px;top:413px;color:#c4c4c4;font-size:4.8px;transform:scaleX(0.9558);transform-origin:0 0;">Filter</span>
<div style="left:392px;top:410px;width:1px;height:10px;background:#e4e4e4;"></div>
<span style="left:396.4px;top:413px;color:#444;font-size:4.8px;transform:scaleX(1.0437);transform-origin:0 0;">All Output</span>
<svg style="left:419.6px;top:412.4px" width="2.8" height="4.8" viewBox="0 0 2.8 4.8"><path d="M0.3 1.8L1.4 0.5L2.5 1.8M0.3 3L1.4 4.3L2.5 3" fill="none" stroke="#666" stroke-width="0.5"/></svg>
<div style="left:473.9px;top:410.7px;width:68.7px;height:7.6px;background:#efefef;border-radius:1.2px;"></div>
<svg style="left:476px;top:411.8px" width="5.2" height="5.2" viewBox="0 0 5.2 5.2"><circle cx="2.6" cy="2.6" r="2.2" fill="none" stroke="#bbb" stroke-width="0.5"/><path d="M1.5 1.7H3.7L2.9 2.7V3.6L2.3 3.3V2.7Z" fill="#bbb"/></svg>
<span style="left:482.9px;top:413px;color:#c4c4c4;font-size:4.8px;transform:scaleX(0.9745);transform-origin:0 0;">Filter</span>
<svg style="left:548.6px;top:411px" width="5.6" height="6.8" viewBox="0 0 5.6 6.8"><path d="M0.3 1.2H5.3M1.9 1.1V0.4H3.7V1.1" fill="none" stroke="#aaa" stroke-width="0.55"/><path d="M0.9 1.6L1.3 6.4H4.3L4.7 1.6Z" fill="#b5b5b5"/></svg>
<div style="left:556px;top:412px;width:1px;height:6px;background:#e8e8e8;"></div>
<svg style="left:558.8px;top:411.4px" width="13.6" height="6.6" viewBox="0 0 13.6 6.6"><rect x="0.3" y="0.3" width="6.2" height="6" fill="none" stroke="#3d86f0" stroke-width="0.6"/><rect x="0.3" y="0.3" width="1.6" height="6" fill="#3d86f0"/><rect x="7.1" y="0.3" width="6.2" height="6" fill="none" stroke="#3d86f0" stroke-width="0.6"/><rect x="11.7" y="0.3" width="1.6" height="6" fill="#3d86f0"/></svg>
<div style="left:574px;top:28px;width:104px;height:392px;background:#eeeeee;"></div>
<div style="left:574px;top:28px;width:1px;height:392px;background:#d8d8d8;"></div>
<div style="left:575px;top:39px;width:103px;height:1px;background:#dadada;"></div>
<svg style="left:618px;top:30.2px" width="5" height="6" viewBox="0 0 5 6"><path d="M0.3 0.3H3.1L4.7 1.9V5.7H0.3Z" fill="#3d86f0"/><path d="M3 0.4V2H4.6" fill="none" stroke="#fff" stroke-width="0.45"/><rect x="1" y="2.6" width="3" height="2.5" fill="#fff" opacity="0.9"/></svg>
<svg style="left:629px;top:30.6px" width="5.6" height="5.6" viewBox="0 0 5.6 5.6"><circle cx="2.8" cy="2.8" r="2.3" fill="none" stroke="#6a6a6a" stroke-width="0.6"/><path d="M2.8 1.4V2.9L3.8 3.5" fill="none" stroke="#6a6a6a" stroke-width="0.5"/></svg>
<span style="left:426.29999999999995px;width:400px;text-align:center;top:172px;color:#858585;font-size:6.7px;-webkit-text-stroke-width:0;transform:scaleX(1.0055);transform-origin:50% 0;">Not Applicable</span>
<div style="left:575px;top:314px;width:103px;height:1px;background:#dadada;"></div>
<div style="left:575px;top:315px;width:103px;height:11px;background:#fafafa;"></div>
<div style="left:575px;top:326px;width:103px;height:1px;background:#dedede;"></div>
<div style="left:575px;top:327px;width:103px;height:82px;background:#fafafa;"></div>
<svg style="left:605.9px;top:317.8px" width="5.2" height="5.6" viewBox="0 0 5.2 5.6"><path d="M0.35 0.35H3.2L4.85 2V5.25H0.35Z" fill="none" stroke="#a8a8a8" stroke-width="0.6"/><path d="M3.1 0.4V2.1H4.8" fill="#a8a8a8"/></svg>
<svg style="left:617.8px;top:317.8px" width="5.4" height="5.8" viewBox="0 0 5.4 5.8"><path d="M1.6 0.4Q0.8 0.4 0.8 1.3V2.3L0.3 2.9L0.8 3.5V4.5Q0.8 5.4 1.6 5.4M3.8 0.4Q4.6 0.4 4.6 1.3V2.3L5.1 2.9L4.6 3.5V4.5Q4.6 5.4 3.8 5.4" fill="none" stroke="#999" stroke-width="0.55"/></svg>
<svg style="left:629px;top:317.5px" width="6.4" height="6.2" viewBox="0 0 6.4 6.2"><circle cx="3.2" cy="3.1" r="2.6" fill="none" stroke="#3d86f0" stroke-width="0.9"/><path d="M3.2 1.9V4.3M2.3 2.6H4.1" stroke="#3d86f0" stroke-width="0.5"/></svg>
<svg style="left:641px;top:318.3px" width="6" height="4.6" viewBox="0 0 6 4.6"><rect x="0.35" y="0.35" width="5.3" height="3.9" fill="none" stroke="#a8a8a8" stroke-width="0.7"/><rect x="0.35" y="0.35" width="1.4" height="3.9" fill="#a8a8a8"/></svg>
<span style="left:426.20000000000005px;width:400px;text-align:center;top:365px;color:#858585;font-size:6.7px;-webkit-text-stroke-width:0;transform:scaleX(0.9947);transform-origin:50% 0;">No Matches</span>
<div style="left:575px;top:409px;width:103px;height:11px;background:#fafafa;"></div>
<svg style="left:577.8px;top:411.5px" width="5.6" height="5.6" viewBox="0 0 5.6 5.6"><path d="M0.3 0.3H2.5V2.5H0.3Z M3.1 0.3H5.3V2.5H3.1Z M0.3 3.1H2.5V5.3H0.3Z M3.1 3.1H5.3V5.3H3.1Z" fill="none" stroke="#8a8a8a" stroke-width="0.55"/></svg>
<div style="left:586.1px;top:410.3px;width:89.4px;height:8.2px;background:#efefef;border-radius:1.2px;box-shadow:inset 0 0 0 0.5px #e2e2e2;"></div>
<svg style="left:588px;top:411.8px" width="5.2" height="5.2" viewBox="0 0 5.2 5.2"><circle cx="2.6" cy="2.6" r="2.2" fill="none" stroke="#bbb" stroke-width="0.5"/><path d="M1.5 1.7H3.7L2.9 2.7V3.6L2.3 3.3V2.7Z" fill="#bbb"/></svg>
<span style="left:594.9px;top:413px;color:#c4c4c4;font-size:4.8px;transform:scaleX(0.9652);transform-origin:0 0;">Filter</span></div></body></html>
